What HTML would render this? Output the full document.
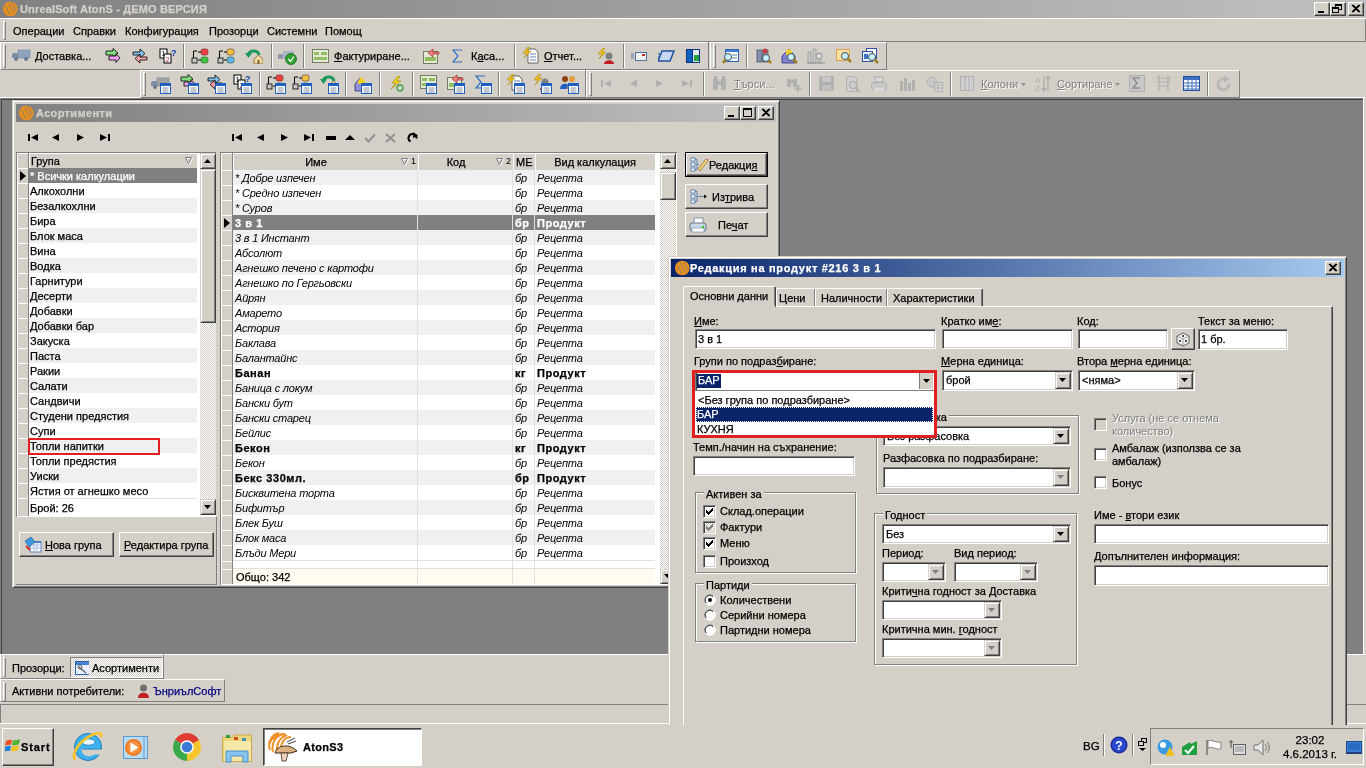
<!DOCTYPE html><html><head><meta charset="utf-8"><style>
*{margin:0;padding:0}
html,body{width:1366px;height:768px;overflow:hidden;background:#d4d0c8;font-family:"Liberation Sans",sans-serif;font-size:11px;color:#000}
div{position:absolute;box-sizing:border-box}
.t{white-space:nowrap;line-height:13px;font-size:11px;-webkit-text-stroke:0.25px}
#root{position:absolute;left:0;top:0;width:1366px;height:768px;will-change:transform}
.b{font-weight:bold}
.i{font-style:italic}
.r{border:1px solid;border-color:#fff #404040 #404040 #fff;box-shadow:inset -1px -1px #808080;background:#d4d0c8}
.sb{border:1px solid;border-color:#d4d0c8 #404040 #404040 #d4d0c8;box-shadow:inset 1px 1px #fff,inset -1px -1px #808080;background:#d4d0c8}
.tr{border:1px solid;border-color:#fff #808080 #808080 #fff}
.ts{border:1px solid;border-color:#808080 #fff #fff #808080}
.s{border:1px solid;border-color:#808080 #fff #fff #808080;box-shadow:inset 1px 1px #404040,inset -1px -1px #d4d0c8;background:#fff}
.g{border:1px solid #808080;box-shadow:inset 1px 1px #fff,1px 1px #fff}
.u{text-decoration:underline}
.dith{background-color:#fff;background-image:linear-gradient(45deg,#d4d0c8 25%,transparent 25%,transparent 75%,#d4d0c8 75%),linear-gradient(45deg,#d4d0c8 25%,transparent 25%,transparent 75%,#d4d0c8 75%);background-size:2px 2px;background-position:0 0,1px 1px}
</style></head><body><div id="root"><div style="left:0px;top:0px;width:1366px;height:18px;background:linear-gradient(to right,#808080,#c0c0c0)"></div>
<svg style="position:absolute;left:2px;top:1px;" width="16" height="16" viewBox="0 0 16 16"><circle cx="8.3" cy="8" r="7.3" fill="#e8901e"/><path d="M3.5 5 L8 14 M6.5 2.5 L11.5 12.5 M10 2 L14 10" stroke="#9a8060" stroke-width="1.3" opacity="0.85"/></svg>
<div class="t b" style="left:20px;top:3px;color:#d4d0c8;letter-spacing:0.15px">UnrealSoft AtonS - ДЕМО ВЕРСИЯ</div>
<div class="r" style="left:1314px;top:2px;width:16px;height:14px;"></div>
<svg style="position:absolute;left:1314px;top:2px;" width="16" height="14" viewBox="0 0 16 14"><rect x="4" y="9" width="6" height="2" fill="#000"/></svg>
<div class="r" style="left:1330px;top:2px;width:16px;height:14px;"></div>
<svg style="position:absolute;left:1330px;top:2px;" width="16" height="14" viewBox="0 0 16 14"><rect x="5.5" y="2.5" width="6" height="5" fill="none" stroke="#000"/><rect x="5" y="2" width="7" height="2" fill="#000"/><rect x="2.5" y="5.5" width="6" height="5" fill="#d4d0c8" stroke="#000"/><rect x="2" y="5" width="7" height="2" fill="#000"/></svg>
<div class="r" style="left:1348px;top:2px;width:16px;height:14px;"></div>
<svg style="position:absolute;left:1348px;top:2px;" width="16" height="14" viewBox="0 0 16 14"><path d="M4 3 L11 10 M5 3 L12 10 M11 3 L4 10 M12 3 L5 10" stroke="#000" stroke-width="1.1"/></svg>
<div style="left:0px;top:18px;width:1366px;height:1px;background:#fff"></div>
<div style="left:0px;top:41px;width:1366px;height:1px;background:#808080"></div>
<div style="left:1365px;top:19px;width:1px;height:22px;background:#808080"></div>
<div class="tr" style="left:3px;top:21px;width:3px;height:19px;"></div>
<div class="t " style="left:13px;top:25px;">Операции</div>
<div class="t " style="left:73px;top:25px;">Справки</div>
<div class="t " style="left:125px;top:25px;">Конфигурация</div>
<div class="t " style="left:209px;top:25px;">Прозорци</div>
<div class="t " style="left:267px;top:25px;">Системни</div>
<div class="t " style="left:325px;top:25px;">Помощ</div>
<div class="tr" style="left:0px;top:42px;width:887px;height:28px;"></div>
<div class="tr" style="left:3px;top:44px;width:3px;height:24px;"></div>
<svg style="position:absolute;left:12px;top:47px;" width="19" height="16" viewBox="0 0 19 16"><rect x="6" y="3" width="12" height="8" fill="#8fa3bd" stroke="#7088a8" stroke-width="0.6"/><path d="M1 6 H6 V11 H0 V8 Z" fill="#7c8ea8"/><circle cx="4" cy="12" r="2" fill="#6a7a90"/><circle cx="14" cy="12" r="2" fill="#6a7a90"/></svg>
<div class="t " style="left:35px;top:50px;"><span class="u">Д</span>оставка...</div>
<svg style="position:absolute;left:105px;top:48px;" width="16" height="16" viewBox="0 0 16 16"><path d="M1 3 H8 V0.5 L13 5 L8 9.5 V7 H1 Z" fill="#80e080" stroke="#000" stroke-width="0.8"/><path d="M4 8 H11 V5.5 L15 10 L11 14.5 V12 H4 Z" fill="#f0a0f0" stroke="#000" stroke-width="0.8"/></svg>
<svg style="position:absolute;left:132px;top:48px;" width="16" height="16" viewBox="0 0 16 16"><path d="M1 4 H8 V1 L13 5.5 L8 10 V7 H1 Z" fill="#80c0f0" stroke="#000" stroke-width="0.8"/><path d="M15 9 H8 V6 L3 10.5 L8 15 V12 H15 Z" fill="#f0a0a0" stroke="#000" stroke-width="0.8"/></svg>
<svg style="position:absolute;left:159px;top:48px;" width="17" height="16" viewBox="0 0 17 16"><rect x="1" y="1" width="7" height="9" fill="#fff" stroke="#000"/><rect x="5" y="6" width="7" height="9" fill="#fff" stroke="#000"/><text x="2.5" y="8" font-size="7" font-family="Liberation Sans">1</text><text x="6.5" y="14" font-size="7" fill="#c03030" font-family="Liberation Sans">2</text><text x="12" y="8" font-size="9" font-weight="bold" fill="#1040b0" font-family="Liberation Sans">?</text></svg>
<div style="left:183px;top:44px;width:1px;height:24px;background:#808080"></div>
<div style="left:184px;top:44px;width:1px;height:24px;background:#fff"></div>
<svg style="position:absolute;left:191px;top:48px;" width="18" height="16" viewBox="0 0 18 16"><path d="M2.5 10 V3 H6" stroke="#000" fill="none"/><rect x="1" y="10" width="5" height="5" fill="#c8c8c8" stroke="#000" stroke-width="0.8"/><path d="M7 4 H10 M7 12 H10" stroke="#000"/><rect x="10" y="1" width="7" height="6" rx="2" fill="#f04040" stroke="#603030" stroke-width="0.6"/><rect x="10" y="9" width="7" height="6" rx="2" fill="#40c040" stroke="#306030" stroke-width="0.6"/></svg>
<svg style="position:absolute;left:217px;top:48px;" width="18" height="16" viewBox="0 0 18 16"><path d="M2.5 10 V3 H6" stroke="#000" fill="none"/><rect x="1" y="10" width="5" height="5" fill="#c8c8c8" stroke="#000" stroke-width="0.8"/><path d="M7 4 H10 M7 12 H10" stroke="#000"/><rect x="10" y="1" width="7" height="6" rx="2" fill="#f0c040" stroke="#603030" stroke-width="0.6"/><rect x="10" y="9" width="7" height="6" rx="2" fill="#60b0f0" stroke="#306030" stroke-width="0.6"/></svg>
<svg style="position:absolute;left:245px;top:48px;" width="18" height="16" viewBox="0 0 18 16"><path d="M3 8 C3 2, 13 1, 14 7" stroke="#1a9a5a" stroke-width="3" fill="none"/><path d="M0 5 L3.5 10 L7 5 Z" fill="#1a9a5a"/><path d="M9 11 L13.5 7 L18 11 V16 H9 Z" fill="#f0d8a0" stroke="#806030" stroke-width="0.8"/><rect x="12.5" y="12" width="2" height="4" fill="#806030"/></svg>
<div style="left:271px;top:44px;width:1px;height:24px;background:#808080"></div>
<div style="left:272px;top:44px;width:1px;height:24px;background:#fff"></div>
<svg style="position:absolute;left:278px;top:48px;" width="19" height="17" viewBox="0 0 19 17"><rect x="5" y="3" width="11" height="8" fill="#a8b4c4"/><path d="M0 6 H5 V11 H0 Z" fill="#909cac"/><circle cx="13" cy="11" r="5.5" fill="#30a030" stroke="#106010" stroke-width="0.7"/><path d="M10.5 11 L12.5 13.5 L16 8.5" stroke="#fff" stroke-width="1.3" fill="none"/></svg>
<div style="left:303px;top:44px;width:1px;height:24px;background:#808080"></div>
<div style="left:304px;top:44px;width:1px;height:24px;background:#fff"></div>
<svg style="position:absolute;left:312px;top:48px;" width="17" height="16" viewBox="0 0 17 16"><rect x="0.5" y="1.5" width="16" height="13" fill="#e8e8d8" stroke="#708060"/><rect x="2" y="4" width="5" height="3" fill="#8fbf5f"/><rect x="9" y="4" width="6" height="3" fill="#8fbf5f"/><rect x="2" y="9" width="13" height="3" fill="#8fbf5f"/></svg>
<div class="t " style="left:334px;top:50px;"><span class="u">Ф</span>актуриране...</div>
<svg style="position:absolute;left:423px;top:48px;" width="17" height="16" viewBox="0 0 17 16"><rect x="0.5" y="3.5" width="14" height="12" fill="#e8e8d8" stroke="#708060"/><rect x="2" y="9" width="11" height="4" fill="#8fbf5f"/><path d="M16 4 H10 V1 L5 5 L10 9 V6 H16 Z" fill="#f08080" stroke="#a03030" stroke-width="0.7"/></svg>
<svg style="position:absolute;left:452px;top:48px;" width="11" height="16" viewBox="0 0 11 16"><path d="M10 2 H1 L6 8 L1 14 H10" stroke="#2a70c0" stroke-width="1.2" fill="none"/></svg>
<div class="t " style="left:471px;top:50px;">К<span class="u">а</span>са...</div>
<div style="left:514px;top:44px;width:1px;height:24px;background:#808080"></div>
<div style="left:515px;top:44px;width:1px;height:24px;background:#fff"></div>
<svg style="position:absolute;left:523px;top:47px;" width="16" height="17" viewBox="0 0 16 17"><path d="M5 2 H12 L15 5 V16 H5 Z" fill="#fff" stroke="#404040" stroke-width="0.8"/><path d="M7 7 H13 M7 10 H13 M7 13 H13" stroke="#6080b0"/><path d="M5 0 L0 6 H4 L1 11 L8 4 H4 L7 0 Z" fill="#f0c020" stroke="#a08000" stroke-width="0.5"/></svg>
<div class="t " style="left:544px;top:50px;"><span class="u">О</span>тчет...</div>
<svg style="position:absolute;left:598px;top:48px;" width="16" height="16" viewBox="0 0 16 16"><path d="M5 0 L0 6 H4 L1 11 L8 4 H4 L7 0 Z" fill="#f0c020" stroke="#a08000" stroke-width="0.5"/><circle cx="11" cy="8" r="3.5" fill="#808080"/><path d="M6 16 C6 11, 16 11, 16 16 Z" fill="#c02020"/></svg>
<div style="left:623px;top:44px;width:1px;height:24px;background:#808080"></div>
<div style="left:624px;top:44px;width:1px;height:24px;background:#fff"></div>
<svg style="position:absolute;left:631px;top:48px;" width="16" height="16" viewBox="0 0 16 16"><path d="M0 6 H3 M0 8 H3 M0 10 H3" stroke="#6080a0"/><rect x="4.5" y="4.5" width="11" height="8" fill="#f0f0f0" stroke="#5070a0"/><rect x="11" y="6" width="3" height="2" fill="#c03030"/></svg>
<svg style="position:absolute;left:658px;top:48px;" width="17" height="16" viewBox="0 0 17 16"><path d="M4 3 H16 L12 13 H0 Z" fill="#c8d8f0" stroke="#2050a0" stroke-width="1.5"/><path d="M0 6 H2 M0 9 H1" stroke="#2050a0"/></svg>
<svg style="position:absolute;left:686px;top:48px;" width="14" height="16" viewBox="0 0 14 16"><rect x="0.5" y="1.5" width="6" height="13" fill="#1060c0" stroke="#0a3080"/><rect x="6.5" y="1.5" width="7" height="13" fill="#e0e8f0" stroke="#0a3080"/><rect x="8" y="7" width="5" height="6" fill="#20a040"/></svg>
<div style="left:708px;top:42px;width:1px;height:28px;background:#808080"></div>
<div class="tr" style="left:710px;top:42px;width:177px;height:28px;"></div>
<div class="tr" style="left:713px;top:44px;width:3px;height:24px;"></div>
<svg style="position:absolute;left:722px;top:48px;" width="17" height="16" viewBox="0 0 17 16"><rect x="3.5" y="1.5" width="13" height="12" fill="#fff" stroke="#3060b0"/><rect x="4" y="2" width="12" height="2" fill="#4080d0"/><path d="M10 7 H15 M10 10 H15" stroke="#6080b0"/><circle cx="6" cy="9" r="3.5" fill="#c8f0f8" stroke="#405060"/><path d="M3.5 11.5 L1 15" stroke="#a08020" stroke-width="2.5"/></svg>
<div style="left:746px;top:44px;width:1px;height:24px;background:#808080"></div>
<div style="left:747px;top:44px;width:1px;height:24px;background:#fff"></div>
<svg style="position:absolute;left:755px;top:48px;" width="17" height="16" viewBox="0 0 17 16"><rect x="2" y="2" width="5" height="12" fill="#8090a8" stroke="#404860" stroke-width="0.7"/><rect x="8" y="2" width="5" height="12" fill="#8090a8" stroke="#404860" stroke-width="0.7"/><circle cx="10" cy="3" r="2.5" fill="#c04040"/><circle cx="11" cy="10" r="3.5" fill="#c8f0f8" stroke="#405060"/><path d="M13.5 12.5 L16 15" stroke="#a08020" stroke-width="2.5"/></svg>
<svg style="position:absolute;left:781px;top:48px;" width="17" height="16" viewBox="0 0 17 16"><path d="M1 8 L8 1 L14 8 V15 H1 Z" fill="#8080d0" stroke="#303070" stroke-width="0.8"/><path d="M5 3 L8 1 L11 3 V7 H5 Z" fill="#f0d020"/><circle cx="10" cy="9" r="3.5" fill="#c8f0f8" stroke="#405060"/><path d="M12.5 11.5 L16 15" stroke="#a08020" stroke-width="2.5"/></svg>
<svg style="position:absolute;left:807px;top:48px;" width="19" height="16" viewBox="0 0 19 16"><rect x="1" y="4" width="3" height="11" fill="#c8c8c8" stroke="#909090" stroke-width="0.6"/><rect x="6" y="1" width="3" height="14" fill="#c8c8c8" stroke="#909090" stroke-width="0.6"/><rect x="11" y="6" width="3" height="9" fill="#c8c8c8" stroke="#909090" stroke-width="0.6"/><circle cx="12" cy="8" r="3" fill="#d8d8d8" stroke="#909090"/><path d="M0 15 H18" stroke="#909090"/></svg>
<svg style="position:absolute;left:836px;top:48px;" width="16" height="16" viewBox="0 0 16 16"><rect x="0.5" y="1.5" width="13" height="11" fill="#f8e0a0" stroke="#e0a050"/><circle cx="9" cy="8" r="3.5" fill="#c8f0f8" stroke="#405060"/><path d="M11.5 10.5 L15 14" stroke="#a08020" stroke-width="2.5"/></svg>
<svg style="position:absolute;left:862px;top:48px;" width="17" height="16" viewBox="0 0 17 16"><rect x="4.5" y="0.5" width="10" height="10" fill="#fff" stroke="#3050a0"/><rect x="0.5" y="3.5" width="10" height="10" fill="#e8f0f8" stroke="#3050a0"/><rect x="2" y="6" width="4" height="5" fill="#4070c0"/><circle cx="10" cy="9" r="3.5" fill="#c8f0f8" stroke="#405060"/><path d="M12.5 11.5 L16 15" stroke="#a08020" stroke-width="2.5"/></svg>
<div style="left:0px;top:97px;width:1366px;height:1px;background:#fff"></div>
<div class="tr" style="left:140px;top:70px;width:446px;height:28px;"></div>
<div class="tr" style="left:143px;top:72px;width:3px;height:24px;"></div>
<svg style="position:absolute;left:151px;top:75px;" width="19" height="16" viewBox="0 0 19 16"><rect x="6" y="3" width="12" height="8" fill="#a0a0a0" stroke="#7088a8" stroke-width="0.6"/><path d="M1 6 H6 V11 H0 V8 Z" fill="#7c8ea8"/><circle cx="4" cy="12" r="2" fill="#6a7a90"/><circle cx="14" cy="12" r="2" fill="#6a7a90"/></svg>
<svg style="position:absolute;left:160px;top:83px;" width="11" height="11" viewBox="0 0 11 11"><rect x="0.5" y="0.5" width="10" height="10" fill="#fff" stroke="#1f5fbf"/><rect x="0" y="0" width="11" height="3" fill="#1f5fbf"/><path d="M2.5 5 H8.5 M2.5 7 H8.5 M2.5 9 H8.5" stroke="#8090a8"/></svg>
<svg style="position:absolute;left:180px;top:74px;" width="16" height="16" viewBox="0 0 16 16"><path d="M1 3 H8 V0.5 L13 5 L8 9.5 V7 H1 Z" fill="#80e080" stroke="#000" stroke-width="0.8"/><path d="M4 8 H11 V5.5 L15 10 L11 14.5 V12 H4 Z" fill="#f0a0f0" stroke="#000" stroke-width="0.8"/></svg>
<svg style="position:absolute;left:188px;top:83px;" width="11" height="11" viewBox="0 0 11 11"><rect x="0.5" y="0.5" width="10" height="10" fill="#fff" stroke="#1f5fbf"/><rect x="0" y="0" width="11" height="3" fill="#1f5fbf"/><path d="M2.5 5 H8.5 M2.5 7 H8.5 M2.5 9 H8.5" stroke="#8090a8"/></svg>
<svg style="position:absolute;left:207px;top:74px;" width="16" height="16" viewBox="0 0 16 16"><path d="M1 4 H8 V1 L13 5.5 L8 10 V7 H1 Z" fill="#80c0f0" stroke="#000" stroke-width="0.8"/><path d="M15 9 H8 V6 L3 10.5 L8 15 V12 H15 Z" fill="#f0a0a0" stroke="#000" stroke-width="0.8"/></svg>
<svg style="position:absolute;left:215px;top:83px;" width="11" height="11" viewBox="0 0 11 11"><rect x="0.5" y="0.5" width="10" height="10" fill="#fff" stroke="#1f5fbf"/><rect x="0" y="0" width="11" height="3" fill="#1f5fbf"/><path d="M2.5 5 H8.5 M2.5 7 H8.5 M2.5 9 H8.5" stroke="#8090a8"/></svg>
<svg style="position:absolute;left:233px;top:74px;" width="17" height="16" viewBox="0 0 17 16"><rect x="1" y="1" width="7" height="9" fill="#fff" stroke="#000"/><rect x="5" y="6" width="7" height="9" fill="#fff" stroke="#000"/><text x="2.5" y="8" font-size="7" font-family="Liberation Sans">1</text><text x="6.5" y="14" font-size="7" fill="#c03030" font-family="Liberation Sans">2</text><text x="12" y="8" font-size="9" font-weight="bold" fill="#1040b0" font-family="Liberation Sans">?</text></svg>
<svg style="position:absolute;left:241px;top:83px;" width="11" height="11" viewBox="0 0 11 11"><rect x="0.5" y="0.5" width="10" height="10" fill="#fff" stroke="#1f5fbf"/><rect x="0" y="0" width="11" height="3" fill="#1f5fbf"/><path d="M2.5 5 H8.5 M2.5 7 H8.5 M2.5 9 H8.5" stroke="#8090a8"/></svg>
<div style="left:259px;top:72px;width:1px;height:24px;background:#808080"></div>
<div style="left:260px;top:72px;width:1px;height:24px;background:#fff"></div>
<svg style="position:absolute;left:266px;top:74px;" width="18" height="16" viewBox="0 0 18 16"><path d="M2.5 10 V3 H6" stroke="#000" fill="none"/><rect x="1" y="10" width="5" height="5" fill="#c8c8c8" stroke="#000" stroke-width="0.8"/><path d="M7 4 H10 M7 12 H10" stroke="#000"/><rect x="10" y="1" width="7" height="6" rx="2" fill="#f04040" stroke="#603030" stroke-width="0.6"/><rect x="10" y="9" width="7" height="6" rx="2" fill="#c8c8c8" stroke="#306030" stroke-width="0.6"/></svg>
<svg style="position:absolute;left:275px;top:83px;" width="11" height="11" viewBox="0 0 11 11"><rect x="0.5" y="0.5" width="10" height="10" fill="#fff" stroke="#1f5fbf"/><rect x="0" y="0" width="11" height="3" fill="#1f5fbf"/><path d="M2.5 5 H8.5 M2.5 7 H8.5 M2.5 9 H8.5" stroke="#8090a8"/></svg>
<svg style="position:absolute;left:292px;top:74px;" width="18" height="16" viewBox="0 0 18 16"><path d="M2.5 10 V3 H6" stroke="#000" fill="none"/><rect x="1" y="10" width="5" height="5" fill="#c8c8c8" stroke="#000" stroke-width="0.8"/><path d="M7 4 H10 M7 12 H10" stroke="#000"/><rect x="10" y="1" width="7" height="6" rx="2" fill="#f0c040" stroke="#603030" stroke-width="0.6"/><rect x="10" y="9" width="7" height="6" rx="2" fill="#c8c8c8" stroke="#306030" stroke-width="0.6"/></svg>
<svg style="position:absolute;left:301px;top:83px;" width="11" height="11" viewBox="0 0 11 11"><rect x="0.5" y="0.5" width="10" height="10" fill="#fff" stroke="#1f5fbf"/><rect x="0" y="0" width="11" height="3" fill="#1f5fbf"/><path d="M2.5 5 H8.5 M2.5 7 H8.5 M2.5 9 H8.5" stroke="#8090a8"/></svg>
<svg style="position:absolute;left:320px;top:74px;" width="18" height="16" viewBox="0 0 18 16"><path d="M3 8 C3 2, 13 1, 14 7" stroke="#1a9a5a" stroke-width="3" fill="none"/><path d="M0 5 L3.5 10 L7 5 Z" fill="#1a9a5a"/><path d="M9 11 L13.5 7 L18 11 V16 H9 Z" fill="#f0d8a0" stroke="#806030" stroke-width="0.8"/><rect x="12.5" y="12" width="2" height="4" fill="#806030"/></svg>
<svg style="position:absolute;left:328px;top:83px;" width="11" height="11" viewBox="0 0 11 11"><rect x="0.5" y="0.5" width="10" height="10" fill="#fff" stroke="#1f5fbf"/><rect x="0" y="0" width="11" height="3" fill="#1f5fbf"/><path d="M2.5 5 H8.5 M2.5 7 H8.5 M2.5 9 H8.5" stroke="#8090a8"/></svg>
<div style="left:345px;top:72px;width:1px;height:24px;background:#808080"></div>
<div style="left:346px;top:72px;width:1px;height:24px;background:#fff"></div>
<svg style="position:absolute;left:354px;top:76px;" width="13" height="16" viewBox="0 0 13 16"><path d="M1 8 L6 2 L12 8 V15 H1 Z" fill="#9090d8" stroke="#303070" stroke-width="0.8"/><path d="M4 5 L7 1 L11 5 V8 H4 Z" fill="#f0d020"/></svg>
<svg style="position:absolute;left:361px;top:83px;" width="11" height="11" viewBox="0 0 11 11"><rect x="0.5" y="0.5" width="10" height="10" fill="#fff" stroke="#1f5fbf"/><rect x="0" y="0" width="11" height="3" fill="#1f5fbf"/><path d="M2.5 5 H8.5 M2.5 7 H8.5 M2.5 9 H8.5" stroke="#8090a8"/></svg>
<div style="left:379px;top:72px;width:1px;height:24px;background:#808080"></div>
<div style="left:380px;top:72px;width:1px;height:24px;background:#fff"></div>
<svg style="position:absolute;left:390px;top:76px;" width="14" height="16" viewBox="0 0 14 16"><path d="M8 0 L2 7 H6 L1 13 L11 5 H7 L10 0 Z" fill="#f0d020" stroke="#a08000" stroke-width="0.6"/><circle cx="10" cy="12" r="3" fill="none" stroke="#40a040" stroke-width="1.3"/></svg>
<div style="left:412px;top:72px;width:1px;height:24px;background:#808080"></div>
<div style="left:413px;top:72px;width:1px;height:24px;background:#fff"></div>
<svg style="position:absolute;left:420px;top:74px;" width="17" height="16" viewBox="0 0 17 16"><rect x="0.5" y="1.5" width="16" height="13" fill="#e8e8d8" stroke="#708060"/><rect x="2" y="4" width="5" height="3" fill="#8fbf5f"/><rect x="9" y="4" width="6" height="3" fill="#8fbf5f"/><rect x="2" y="9" width="13" height="3" fill="#8fbf5f"/></svg>
<svg style="position:absolute;left:426px;top:83px;" width="11" height="11" viewBox="0 0 11 11"><rect x="0.5" y="0.5" width="10" height="10" fill="#fff" stroke="#1f5fbf"/><rect x="0" y="0" width="11" height="3" fill="#1f5fbf"/><path d="M2.5 5 H8.5 M2.5 7 H8.5 M2.5 9 H8.5" stroke="#8090a8"/></svg>
<svg style="position:absolute;left:447px;top:74px;" width="17" height="16" viewBox="0 0 17 16"><rect x="0.5" y="3.5" width="14" height="12" fill="#e8e8d8" stroke="#708060"/><rect x="2" y="9" width="11" height="4" fill="#8fbf5f"/><path d="M16 4 H10 V1 L5 5 L10 9 V6 H16 Z" fill="#f08080" stroke="#a03030" stroke-width="0.7"/></svg>
<svg style="position:absolute;left:454px;top:83px;" width="11" height="11" viewBox="0 0 11 11"><rect x="0.5" y="0.5" width="10" height="10" fill="#fff" stroke="#1f5fbf"/><rect x="0" y="0" width="11" height="3" fill="#1f5fbf"/><path d="M2.5 5 H8.5 M2.5 7 H8.5 M2.5 9 H8.5" stroke="#8090a8"/></svg>
<svg style="position:absolute;left:475px;top:74px;" width="11" height="16" viewBox="0 0 11 16"><path d="M10 2 H1 L6 8 L1 14 H10" stroke="#2a70c0" stroke-width="1.2" fill="none"/></svg>
<svg style="position:absolute;left:481px;top:83px;" width="11" height="11" viewBox="0 0 11 11"><rect x="0.5" y="0.5" width="10" height="10" fill="#fff" stroke="#1f5fbf"/><rect x="0" y="0" width="11" height="3" fill="#1f5fbf"/><path d="M2.5 5 H8.5 M2.5 7 H8.5 M2.5 9 H8.5" stroke="#8090a8"/></svg>
<div style="left:498px;top:72px;width:1px;height:24px;background:#808080"></div>
<div style="left:499px;top:72px;width:1px;height:24px;background:#fff"></div>
<svg style="position:absolute;left:507px;top:74px;" width="16" height="17" viewBox="0 0 16 17"><path d="M5 2 H12 L15 5 V16 H5 Z" fill="#fff" stroke="#404040" stroke-width="0.8"/><path d="M7 7 H13 M7 10 H13 M7 13 H13" stroke="#6080b0"/><path d="M5 0 L0 6 H4 L1 11 L8 4 H4 L7 0 Z" fill="#f0c020" stroke="#a08000" stroke-width="0.5"/></svg>
<svg style="position:absolute;left:514px;top:83px;" width="11" height="11" viewBox="0 0 11 11"><rect x="0.5" y="0.5" width="10" height="10" fill="#fff" stroke="#1f5fbf"/><rect x="0" y="0" width="11" height="3" fill="#1f5fbf"/><path d="M2.5 5 H8.5 M2.5 7 H8.5 M2.5 9 H8.5" stroke="#8090a8"/></svg>
<svg style="position:absolute;left:534px;top:74px;" width="16" height="16" viewBox="0 0 16 16"><path d="M5 0 L0 6 H4 L1 11 L8 4 H4 L7 0 Z" fill="#f0c020" stroke="#a08000" stroke-width="0.5"/><circle cx="11" cy="8" r="3.5" fill="#808080"/><path d="M6 16 C6 11, 16 11, 16 16 Z" fill="#c02020"/></svg>
<svg style="position:absolute;left:541px;top:83px;" width="11" height="11" viewBox="0 0 11 11"><rect x="0.5" y="0.5" width="10" height="10" fill="#fff" stroke="#1f5fbf"/><rect x="0" y="0" width="11" height="3" fill="#1f5fbf"/><path d="M2.5 5 H8.5 M2.5 7 H8.5 M2.5 9 H8.5" stroke="#8090a8"/></svg>
<svg style="position:absolute;left:560px;top:75px;" width="17" height="16" viewBox="0 0 17 16"><circle cx="5" cy="4" r="3" fill="#904010"/><path d="M0 14 C0 7, 10 7, 10 14 Z" fill="#2060c0"/><circle cx="12" cy="4" r="3" fill="#e0a040"/><path d="M7 14 C7 7, 17 7, 17 14 Z" fill="#e09050"/></svg>
<svg style="position:absolute;left:568px;top:83px;" width="11" height="11" viewBox="0 0 11 11"><rect x="0.5" y="0.5" width="10" height="10" fill="#fff" stroke="#1f5fbf"/><rect x="0" y="0" width="11" height="3" fill="#1f5fbf"/><path d="M2.5 5 H8.5 M2.5 7 H8.5 M2.5 9 H8.5" stroke="#8090a8"/></svg>
<div style="left:585px;top:70px;width:1px;height:28px;background:#808080"></div>
<div class="tr" style="left:586px;top:70px;width:654px;height:28px;"></div>
<div class="tr" style="left:589px;top:72px;width:3px;height:24px;"></div>
<svg style="position:absolute;left:601px;top:80px;" width="11" height="7" viewBox="0 0 11 7"><rect x="0" y="0" width="2" height="7" fill="#b0b0b0"/><path d="M10 0 V7 L3 3.5 Z" fill="#b0b0b0"/></svg>
<svg style="position:absolute;left:630px;top:80px;" width="7" height="7" viewBox="0 0 7 7"><path d="M7 0 V7 L0 3.5 Z" fill="#b0b0b0"/></svg>
<svg style="position:absolute;left:656px;top:80px;" width="7" height="7" viewBox="0 0 7 7"><path d="M0 0 V7 L7 3.5 Z" fill="#b0b0b0"/></svg>
<svg style="position:absolute;left:682px;top:80px;" width="10" height="7" viewBox="0 0 10 7"><path d="M0 0 V7 L7 3.5 Z" fill="#b0b0b0"/><rect x="8" y="0" width="2" height="7" fill="#b0b0b0"/></svg>
<div style="left:703px;top:72px;width:1px;height:24px;background:#808080"></div>
<div style="left:704px;top:72px;width:1px;height:24px;background:#fff"></div>
<svg style="position:absolute;left:712px;top:76px;" width="15" height="15" viewBox="0 0 15 15"><rect x="1" y="3" width="5" height="11" fill="#b0b0b0"/><rect x="9" y="3" width="5" height="11" fill="#b0b0b0"/><rect x="5" y="5" width="5" height="4" fill="#b0b0b0"/><rect x="2" y="0" width="3" height="4" fill="#b0b0b0"/><rect x="10" y="0" width="3" height="4" fill="#b0b0b0"/></svg>
<div class="t " style="left:734px;top:78px;color:#808080;text-shadow:1px 1px 0 #fff;-webkit-text-stroke:0"><span class="u">Т</span>ърси...</div>
<svg style="position:absolute;left:786px;top:76px;" width="16" height="16" viewBox="0 0 16 16"><rect x="1" y="3" width="4" height="8" fill="#b0b0b0"/><rect x="7" y="3" width="4" height="8" fill="#b0b0b0"/><rect x="4" y="4" width="4" height="3" fill="#b0b0b0"/><path d="M12 9 V16 M8.5 12.5 H15.5" stroke="#b0b0b0" stroke-width="2"/></svg>
<div style="left:809px;top:72px;width:1px;height:24px;background:#808080"></div>
<div style="left:810px;top:72px;width:1px;height:24px;background:#fff"></div>
<svg style="position:absolute;left:819px;top:76px;" width="15" height="15" viewBox="0 0 15 15"><rect x="0.5" y="0.5" width="14" height="14" fill="#b0b0b0" stroke="#b8b8b8"/><rect x="3" y="1" width="9" height="5" fill="#c8c8c8"/><rect x="3" y="9" width="9" height="5" fill="#c0c0c0"/></svg>
<svg style="position:absolute;left:846px;top:76px;" width="15" height="16" viewBox="0 0 15 16"><path d="M0.5 0.5 H8 L11 3 V15.5 H0.5 Z" fill="#d0d0d0" stroke="#b0b0b0"/><circle cx="7" cy="9" r="3.5" fill="none" stroke="#b0b0b0" stroke-width="1.4"/><path d="M9.5 11.5 L14 16" stroke="#b0b0b0" stroke-width="2"/></svg>
<svg style="position:absolute;left:871px;top:76px;" width="16" height="16" viewBox="0 0 16 16"><rect x="4" y="1" width="8" height="5" fill="#d8d8d8" stroke="#b0b0b0"/><rect x="0.5" y="6.5" width="15" height="7" rx="2" fill="#c8c8c8" stroke="#b0b0b0"/><rect x="3" y="12" width="10" height="3" fill="#d8d8d8"/></svg>
<svg style="position:absolute;left:899px;top:76px;" width="16" height="16" viewBox="0 0 16 16"><rect x="1" y="5" width="3" height="10" fill="#b0b0b0"/><rect x="5" y="2" width="3" height="13" fill="#b0b0b0"/><rect x="9" y="7" width="3" height="8" fill="#b0b0b0"/><rect x="13" y="4" width="3" height="11" fill="#b0b0b0"/></svg>
<svg style="position:absolute;left:926px;top:76px;" width="17" height="16" viewBox="0 0 17 16"><circle cx="6" cy="6" r="5" fill="#c8c8c8" stroke="#b0b0b0"/><rect x="8.5" y="6.5" width="8" height="9" fill="#d8d8d8" stroke="#b0b0b0"/><path d="M9 9 H16 M9 12 H16 M12 7 V15" stroke="#b0b0b0"/></svg>
<div style="left:950px;top:72px;width:1px;height:24px;background:#808080"></div>
<div style="left:951px;top:72px;width:1px;height:24px;background:#fff"></div>
<svg style="position:absolute;left:960px;top:76px;" width="14" height="15" viewBox="0 0 14 15"><rect x="0.5" y="0.5" width="13" height="14" fill="#d0d0d0" stroke="#b0b0b0"/><path d="M5 1 V14 M9 1 V14" stroke="#b0b0b0"/></svg>
<div class="t " style="left:981px;top:78px;color:#808080;text-shadow:1px 1px 0 #fff;-webkit-text-stroke:0"><span class="u">К</span>олони</div>
<svg style="position:absolute;left:1021px;top:83px;" width="5" height="3" viewBox="0 0 5 3"><path d="M0 0 H5 L2.5 3 Z" fill="#909090"/></svg>
<svg style="position:absolute;left:1035px;top:75px;" width="17" height="17" viewBox="0 0 17 17"><text x="0" y="8" font-size="8" fill="#b0b0b0" font-family="Liberation Sans">A</text><text x="0" y="16" font-size="8" fill="#b0b0b0" font-family="Liberation Sans">Z</text><path d="M9 1 V16 M7 13 L9 16 L11 13 M13 16 V1 M11 4 L13 1 L15 4" stroke="#b0b0b0" stroke-width="1.4" fill="none"/></svg>
<div class="t " style="left:1057px;top:78px;color:#808080;text-shadow:1px 1px 0 #fff;-webkit-text-stroke:0"><span class="u">С</span>ортиране</div>
<svg style="position:absolute;left:1115px;top:83px;" width="5" height="3" viewBox="0 0 5 3"><path d="M0 0 H5 L2.5 3 Z" fill="#909090"/></svg>
<svg style="position:absolute;left:1129px;top:75px;" width="16" height="17" viewBox="0 0 16 17"><rect x="0.5" y="0.5" width="15" height="16" fill="#c8c8c8" stroke="#b0b0b0"/><path d="M11 3 H4 L8 8 L4 13 H11" stroke="#909090" stroke-width="1.6" fill="none"/></svg>
<svg style="position:absolute;left:1156px;top:75px;" width="16" height="17" viewBox="0 0 16 17"><path d="M0 3 H15 M0 7 H15 M3 0 V16 M12 0 V16 M3 11 H12" stroke="#b0b0b0" stroke-width="1.2" fill="none"/></svg>
<svg style="position:absolute;left:1183px;top:76px;" width="17" height="15" viewBox="0 0 17 15"><rect x="0.5" y="0.5" width="16" height="14" fill="#fff" stroke="#2050a0"/><rect x="1" y="1" width="15" height="3" fill="#4070c0"/><path d="M1 7 H16 M1 10 H16 M1 13 H16 M5 4 V14 M9 4 V14 M13 4 V14" stroke="#4070c0"/></svg>
<div style="left:1207px;top:72px;width:1px;height:24px;background:#808080"></div>
<div style="left:1208px;top:72px;width:1px;height:24px;background:#fff"></div>
<svg style="position:absolute;left:1216px;top:76px;" width="16" height="16" viewBox="0 0 16 16"><path d="M13 8 A5.5 5.5 0 1 1 9 3" stroke="#b8b8b8" stroke-width="3" fill="none"/><path d="M8 0 L14 3 L8 7 Z" fill="#b8b8b8"/></svg>
<div style="left:0px;top:98px;width:1366px;height:556px;background:#808080"></div>
<div style="left:0px;top:99px;width:1366px;height:1px;background:#404040"></div>
<div style="left:1px;top:99px;width:1px;height:555px;background:#404040"></div>
<div style="left:0px;top:98px;width:1px;height:556px;background:#808080"></div>
<div style="left:1363px;top:98px;width:1px;height:556px;background:#fff"></div>
<div style="left:1364px;top:98px;width:2px;height:556px;background:#d4d0c8"></div>
<div style="left:12px;top:100px;width:768px;height:488px;background:#d4d0c8;border:1px solid;border-color:#d4d0c8 #404040 #404040 #d4d0c8;box-shadow:inset 1px 1px #fff,inset -1px -1px #808080"></div>
<div style="left:16px;top:104px;width:760px;height:18px;background:linear-gradient(to right,#808080,#c0c0c0)"></div>
<svg style="position:absolute;left:18px;top:105px;" width="16" height="16" viewBox="0 0 16 16"><circle cx="8.3" cy="8" r="7.3" fill="#e8901e"/><path d="M3.5 5 L8 14 M6.5 2.5 L11.5 12.5 M10 2 L14 10" stroke="#9a8060" stroke-width="1.3" opacity="0.85"/></svg>
<div class="t b" style="left:36px;top:107px;color:#d4d0c8;letter-spacing:0.35px">Асортименти</div>
<div class="r" style="left:724px;top:106px;width:16px;height:14px;"></div>
<svg style="position:absolute;left:724px;top:106px;" width="16" height="14" viewBox="0 0 16 14"><rect x="4" y="9" width="6" height="2" fill="#000"/></svg>
<div class="r" style="left:740px;top:106px;width:16px;height:14px;"></div>
<svg style="position:absolute;left:740px;top:106px;" width="16" height="14" viewBox="0 0 16 14"><rect x="3.5" y="2.5" width="8" height="8" fill="none" stroke="#000"/><rect x="3" y="2" width="9" height="2" fill="#000"/></svg>
<div class="r" style="left:758px;top:106px;width:16px;height:14px;"></div>
<svg style="position:absolute;left:758px;top:106px;" width="16" height="14" viewBox="0 0 16 14"><path d="M4 3 L11 10 M5 3 L12 10 M11 3 L4 10 M12 3 L5 10" stroke="#000" stroke-width="1.1"/></svg>
<svg style="position:absolute;left:28px;top:134px;" width="10" height="7" viewBox="0 0 10 7"><rect x="0" y="0" width="2" height="7" fill="#000"/><path d="M10 0 V7 L3 3.5 Z" fill="#000"/></svg>
<svg style="position:absolute;left:52px;top:134px;" width="7" height="7" viewBox="0 0 7 7"><path d="M7 0 V7 L0 3.5 Z" fill="#000"/></svg>
<svg style="position:absolute;left:77px;top:134px;" width="7" height="7" viewBox="0 0 7 7"><path d="M0 0 V7 L7 3.5 Z" fill="#000"/></svg>
<svg style="position:absolute;left:100px;top:134px;" width="10" height="7" viewBox="0 0 10 7"><path d="M0 0 V7 L7 3.5 Z" fill="#000"/><rect x="8" y="0" width="2" height="7" fill="#000"/></svg>
<svg style="position:absolute;left:232px;top:134px;" width="10" height="7" viewBox="0 0 10 7"><rect x="0" y="0" width="2" height="7" fill="#000"/><path d="M10 0 V7 L3 3.5 Z" fill="#000"/></svg>
<svg style="position:absolute;left:257px;top:134px;" width="7" height="7" viewBox="0 0 7 7"><path d="M7 0 V7 L0 3.5 Z" fill="#000"/></svg>
<svg style="position:absolute;left:281px;top:134px;" width="7" height="7" viewBox="0 0 7 7"><path d="M0 0 V7 L7 3.5 Z" fill="#000"/></svg>
<svg style="position:absolute;left:304px;top:134px;" width="10" height="7" viewBox="0 0 10 7"><path d="M0 0 V7 L7 3.5 Z" fill="#000"/><rect x="8" y="0" width="2" height="7" fill="#000"/></svg>
<svg style="position:absolute;left:326px;top:136px;" width="10" height="4" viewBox="0 0 10 4"><rect x="0" y="0" width="10" height="4" fill="#000"/></svg>
<svg style="position:absolute;left:345px;top:135px;" width="10" height="5" viewBox="0 0 10 5"><path d="M0 5 H10 L5 0 Z" fill="#000"/></svg>
<svg style="position:absolute;left:364px;top:133px;" width="12" height="10" viewBox="0 0 12 10"><path d="M1 5 L4.5 8.5 L11 1.5" stroke="#909090" stroke-width="2" fill="none"/></svg>
<svg style="position:absolute;left:385px;top:133px;" width="11" height="10" viewBox="0 0 11 10"><path d="M1 1 L10 9 M10 1 L1 9" stroke="#909090" stroke-width="1.8"/></svg>
<svg style="position:absolute;left:407px;top:132px;" width="12" height="11" viewBox="0 0 12 11"><path d="M9.5 6.5 A4 4 0 1 0 3.5 9.5" stroke="#000" stroke-width="2" fill="none"/><path d="M6 0 L11 3.5 L6 6 Z" fill="#000"/></svg>
<div style="left:16px;top:152px;width:200px;height:365px;background:#fff;border-left:1px solid #808080;border-top:1px solid #808080"></div>
<div style="left:17px;top:153px;width:11px;height:363px;background:#d4d0c8;border-left:1px solid #fff"></div>
<div style="left:28px;top:153px;width:1px;height:363px;background:#808080"></div>
<div style="left:17px;top:153px;width:11px;height:1px;background:#fff"></div>
<div style="left:29px;top:153px;width:168px;height:15px;background:#d4d0c8;border-left:1px solid #fff;border-top:1px solid #fff"></div>
<div class="t " style="left:31px;top:155px;">Група</div>
<svg style="position:absolute;left:185px;top:157px;" width="8" height="8" viewBox="0 0 8 8"><path d="M1.5 1.5 H7.5 L4.5 7.5 Z" fill="none" stroke="#fff"/><path d="M0.5 0.5 H6.5 L3.5 6.5 Z" fill="none" stroke="#808080"/></svg>
<div style="left:29px;top:168px;width:168px;height:15px;background:#808080"></div>
<div style="left:18px;top:168px;width:10px;height:15px;border-top:1px solid #fff"></div>
<div class="t " style="left:30px;top:170px;color:#fff">* Всички калкулации</div>
<div style="left:29px;top:183px;width:168px;height:15px;background:#fff"></div>
<div style="left:18px;top:183px;width:10px;height:15px;border-top:1px solid #fff"></div>
<div class="t " style="left:30px;top:185px;color:#000">Алкохолни</div>
<div style="left:29px;top:198px;width:168px;height:15px;background:#f0f0f0"></div>
<div style="left:18px;top:198px;width:10px;height:15px;border-top:1px solid #fff"></div>
<div class="t " style="left:30px;top:200px;color:#000">Безалкохлни</div>
<div style="left:29px;top:213px;width:168px;height:15px;background:#fff"></div>
<div style="left:18px;top:213px;width:10px;height:15px;border-top:1px solid #fff"></div>
<div class="t " style="left:30px;top:215px;color:#000">Бира</div>
<div style="left:29px;top:228px;width:168px;height:15px;background:#f0f0f0"></div>
<div style="left:18px;top:228px;width:10px;height:15px;border-top:1px solid #fff"></div>
<div class="t " style="left:30px;top:230px;color:#000">Блок маса</div>
<div style="left:29px;top:243px;width:168px;height:15px;background:#fff"></div>
<div style="left:18px;top:243px;width:10px;height:15px;border-top:1px solid #fff"></div>
<div class="t " style="left:30px;top:245px;color:#000">Вина</div>
<div style="left:29px;top:258px;width:168px;height:15px;background:#f0f0f0"></div>
<div style="left:18px;top:258px;width:10px;height:15px;border-top:1px solid #fff"></div>
<div class="t " style="left:30px;top:260px;color:#000">Водка</div>
<div style="left:29px;top:273px;width:168px;height:15px;background:#fff"></div>
<div style="left:18px;top:273px;width:10px;height:15px;border-top:1px solid #fff"></div>
<div class="t " style="left:30px;top:275px;color:#000">Гарнитури</div>
<div style="left:29px;top:288px;width:168px;height:15px;background:#f0f0f0"></div>
<div style="left:18px;top:288px;width:10px;height:15px;border-top:1px solid #fff"></div>
<div class="t " style="left:30px;top:290px;color:#000">Десерти</div>
<div style="left:29px;top:303px;width:168px;height:15px;background:#fff"></div>
<div style="left:18px;top:303px;width:10px;height:15px;border-top:1px solid #fff"></div>
<div class="t " style="left:30px;top:305px;color:#000">Добавки</div>
<div style="left:29px;top:318px;width:168px;height:15px;background:#f0f0f0"></div>
<div style="left:18px;top:318px;width:10px;height:15px;border-top:1px solid #fff"></div>
<div class="t " style="left:30px;top:320px;color:#000">Добавки бар</div>
<div style="left:29px;top:333px;width:168px;height:15px;background:#fff"></div>
<div style="left:18px;top:333px;width:10px;height:15px;border-top:1px solid #fff"></div>
<div class="t " style="left:30px;top:335px;color:#000">Закуска</div>
<div style="left:29px;top:348px;width:168px;height:15px;background:#f0f0f0"></div>
<div style="left:18px;top:348px;width:10px;height:15px;border-top:1px solid #fff"></div>
<div class="t " style="left:30px;top:350px;color:#000">Паста</div>
<div style="left:29px;top:363px;width:168px;height:15px;background:#fff"></div>
<div style="left:18px;top:363px;width:10px;height:15px;border-top:1px solid #fff"></div>
<div class="t " style="left:30px;top:365px;color:#000">Ракии</div>
<div style="left:29px;top:378px;width:168px;height:15px;background:#f0f0f0"></div>
<div style="left:18px;top:378px;width:10px;height:15px;border-top:1px solid #fff"></div>
<div class="t " style="left:30px;top:380px;color:#000">Салати</div>
<div style="left:29px;top:393px;width:168px;height:15px;background:#fff"></div>
<div style="left:18px;top:393px;width:10px;height:15px;border-top:1px solid #fff"></div>
<div class="t " style="left:30px;top:395px;color:#000">Сандвичи</div>
<div style="left:29px;top:408px;width:168px;height:15px;background:#f0f0f0"></div>
<div style="left:18px;top:408px;width:10px;height:15px;border-top:1px solid #fff"></div>
<div class="t " style="left:30px;top:410px;color:#000">Студени предястия</div>
<div style="left:29px;top:423px;width:168px;height:15px;background:#fff"></div>
<div style="left:18px;top:423px;width:10px;height:15px;border-top:1px solid #fff"></div>
<div class="t " style="left:30px;top:425px;color:#000">Супи</div>
<div style="left:29px;top:438px;width:168px;height:15px;background:#f0f0f0"></div>
<div style="left:18px;top:438px;width:10px;height:15px;border-top:1px solid #fff"></div>
<div class="t " style="left:30px;top:440px;color:#000">Топли напитки</div>
<div style="left:29px;top:453px;width:168px;height:15px;background:#fff"></div>
<div style="left:18px;top:453px;width:10px;height:15px;border-top:1px solid #fff"></div>
<div class="t " style="left:30px;top:455px;color:#000">Топли предястия</div>
<div style="left:29px;top:468px;width:168px;height:15px;background:#f0f0f0"></div>
<div style="left:18px;top:468px;width:10px;height:15px;border-top:1px solid #fff"></div>
<div class="t " style="left:30px;top:470px;color:#000">Уиски</div>
<div style="left:29px;top:483px;width:168px;height:15px;background:#fff"></div>
<div style="left:18px;top:483px;width:10px;height:15px;border-top:1px solid #fff"></div>
<div class="t " style="left:30px;top:485px;color:#000">Ястия от агнешко месо</div>
<svg style="position:absolute;left:20px;top:171px;" width="6" height="10" viewBox="0 0 6 10"><path d="M0 0 V10 L6 5 Z" fill="#000"/></svg>
<div style="left:29px;top:498px;width:168px;height:1px;background:#e0e0e0"></div>
<div style="left:18px;top:498px;width:10px;height:16px;border-top:1px solid #fff"></div>
<div class="t " style="left:30px;top:502px;">Брой: 26</div>
<div style="left:197px;top:154px;width:3px;height:361px;background:#fff"></div>
<div class="dith" style="left:200px;top:153px;width:16px;height:346px;"></div>
<div class="sb" style="left:200px;top:153px;width:16px;height:16px;"></div>
<svg style="position:absolute;left:204px;top:159px;" width="7" height="4" viewBox="0 0 7 4"><path d="M0 4 H7 L3.5 0 Z" fill="#000"/></svg>
<div class="sb" style="left:200px;top:169px;width:16px;height:154px;"></div>
<div class="sb" style="left:200px;top:499px;width:16px;height:16px;"></div>
<svg style="position:absolute;left:204px;top:505px;" width="7" height="4" viewBox="0 0 7 4"><path d="M0 0 H7 L3.5 4 Z" fill="#000"/></svg>
<div style="left:16px;top:517px;width:201px;height:68px;background:#d4d0c8;border-right:1px solid #808080;border-bottom:1px solid #808080"></div>
<div class="r" style="left:19px;top:532px;width:95px;height:25px;"></div>
<svg style="position:absolute;left:24px;top:537px;" width="18" height="16" viewBox="0 0 18 16"><rect x="6" y="5" width="11" height="10" fill="#fff" stroke="#6080c0"/><path d="M6 8 H17 M6 11 H17 M10 5 V15 M13 5 V15" stroke="#a0b8e0"/><rect x="6" y="4" width="11" height="2" fill="#4a80d0"/><path d="M1 4 L7 0 L11 5 L5 10 Z" fill="#3a9ae0" stroke="#205080" stroke-width="0.6"/><path d="M2 9 L6 13" stroke="#d03030" stroke-width="2"/></svg>
<div class="t " style="left:45px;top:539px;"><span class="u">Н</span>ова група</div>
<div class="r" style="left:119px;top:532px;width:95px;height:25px;"></div>
<div class="t " style="left:124px;top:539px;"><span class="u">Р</span>едактира група</div>
<div style="left:217px;top:152px;width:3px;height:433px;background:#d4d0c8"></div>
<div style="left:220px;top:152px;width:457px;height:433px;background:#fff;border-left:1px solid #808080;border-top:1px solid #808080"></div>
<div style="left:221px;top:153px;width:11px;height:431px;background:#d4d0c8;border-left:1px solid #fff"></div>
<div style="left:221px;top:153px;width:11px;height:1px;background:#fff"></div>
<div style="left:232px;top:153px;width:1px;height:431px;background:#808080"></div>
<div style="left:233px;top:153px;width:185px;height:17px;background:#d4d0c8;border-left:1px solid #fff;border-top:1px solid #fff"></div>
<div class="t" style="left:166px;top:156px;width:300px;text-align:center;">Име</div>
<svg style="position:absolute;left:401px;top:158px;" width="8" height="8" viewBox="0 0 8 8"><path d="M1.5 1.5 H7.5 L4.5 7.5 Z" fill="none" stroke="#fff"/><path d="M0.5 0.5 H6.5 L3.5 6.5 Z" fill="none" stroke="#808080"/></svg>
<div class="t" style="left:411px;top:156px;font-size:9px;line-height:10px;-webkit-text-stroke:0">1</div>
<div style="left:418px;top:153px;width:95px;height:17px;background:#d4d0c8;border-left:1px solid #fff;border-top:1px solid #fff"></div>
<div class="t" style="left:306px;top:156px;width:300px;text-align:center;">Код</div>
<svg style="position:absolute;left:496px;top:158px;" width="8" height="8" viewBox="0 0 8 8"><path d="M1.5 1.5 H7.5 L4.5 7.5 Z" fill="none" stroke="#fff"/><path d="M0.5 0.5 H6.5 L3.5 6.5 Z" fill="none" stroke="#808080"/></svg>
<div class="t" style="left:506px;top:156px;font-size:9px;line-height:10px;-webkit-text-stroke:0">2</div>
<div style="left:513px;top:153px;width:22px;height:17px;background:#d4d0c8;border-left:1px solid #fff;border-top:1px solid #fff"></div>
<div class="t " style="left:516px;top:156px;">МЕ</div>
<div style="left:535px;top:153px;width:120px;height:17px;background:#d4d0c8;border-left:1px solid #fff;border-top:1px solid #fff"></div>
<div class="t" style="left:445px;top:156px;width:300px;text-align:center;">Вид калкулация</div>
<div style="left:233px;top:170px;width:422px;height:15px;background:#f0f0f0"></div>
<div style="left:222px;top:170px;width:10px;height:15px;border-top:1px solid #fff"></div>
<div class="t i" style="left:235px;top:172px;letter-spacing:-0.2px;-webkit-text-stroke:0">* Добре изпечен</div>
<div class="t i" style="left:515px;top:172px;letter-spacing:-0.2px;-webkit-text-stroke:0">бр</div>
<div class="t i" style="left:537px;top:172px;letter-spacing:-0.2px;-webkit-text-stroke:0">Рецепта</div>
<div style="left:233px;top:185px;width:422px;height:15px;background:#fff"></div>
<div style="left:222px;top:185px;width:10px;height:15px;border-top:1px solid #fff"></div>
<div class="t i" style="left:235px;top:187px;letter-spacing:-0.2px;-webkit-text-stroke:0">* Средно изпечен</div>
<div class="t i" style="left:515px;top:187px;letter-spacing:-0.2px;-webkit-text-stroke:0">бр</div>
<div class="t i" style="left:537px;top:187px;letter-spacing:-0.2px;-webkit-text-stroke:0">Рецепта</div>
<div style="left:233px;top:200px;width:422px;height:15px;background:#f0f0f0"></div>
<div style="left:222px;top:200px;width:10px;height:15px;border-top:1px solid #fff"></div>
<div class="t i" style="left:235px;top:202px;letter-spacing:-0.2px;-webkit-text-stroke:0">* Суров</div>
<div class="t i" style="left:515px;top:202px;letter-spacing:-0.2px;-webkit-text-stroke:0">бр</div>
<div class="t i" style="left:537px;top:202px;letter-spacing:-0.2px;-webkit-text-stroke:0">Рецепта</div>
<div style="left:233px;top:215px;width:422px;height:15px;background:#808080"></div>
<div style="left:222px;top:215px;width:10px;height:15px;border-top:1px solid #fff"></div>
<div class="t b" style="left:235px;top:217px;color:#fff;letter-spacing:0.55px">3 в 1</div>
<div class="t b" style="left:515px;top:217px;color:#fff;letter-spacing:0.55px">бр</div>
<div class="t b" style="left:537px;top:217px;color:#fff;letter-spacing:0.55px">Продукт</div>
<div style="left:233px;top:230px;width:422px;height:15px;background:#f0f0f0"></div>
<div style="left:222px;top:230px;width:10px;height:15px;border-top:1px solid #fff"></div>
<div class="t i" style="left:235px;top:232px;letter-spacing:-0.2px;-webkit-text-stroke:0">3 в 1 Инстант</div>
<div class="t i" style="left:515px;top:232px;letter-spacing:-0.2px;-webkit-text-stroke:0">бр</div>
<div class="t i" style="left:537px;top:232px;letter-spacing:-0.2px;-webkit-text-stroke:0">Рецепта</div>
<div style="left:233px;top:245px;width:422px;height:15px;background:#fff"></div>
<div style="left:222px;top:245px;width:10px;height:15px;border-top:1px solid #fff"></div>
<div class="t i" style="left:235px;top:247px;letter-spacing:-0.2px;-webkit-text-stroke:0">Абсолют</div>
<div class="t i" style="left:515px;top:247px;letter-spacing:-0.2px;-webkit-text-stroke:0">бр</div>
<div class="t i" style="left:537px;top:247px;letter-spacing:-0.2px;-webkit-text-stroke:0">Рецепта</div>
<div style="left:233px;top:260px;width:422px;height:15px;background:#f0f0f0"></div>
<div style="left:222px;top:260px;width:10px;height:15px;border-top:1px solid #fff"></div>
<div class="t i" style="left:235px;top:262px;letter-spacing:-0.2px;-webkit-text-stroke:0">Агнешко печено с картофи</div>
<div class="t i" style="left:515px;top:262px;letter-spacing:-0.2px;-webkit-text-stroke:0">бр</div>
<div class="t i" style="left:537px;top:262px;letter-spacing:-0.2px;-webkit-text-stroke:0">Рецепта</div>
<div style="left:233px;top:275px;width:422px;height:15px;background:#fff"></div>
<div style="left:222px;top:275px;width:10px;height:15px;border-top:1px solid #fff"></div>
<div class="t i" style="left:235px;top:277px;letter-spacing:-0.2px;-webkit-text-stroke:0">Агнешко по Гергьовски</div>
<div class="t i" style="left:515px;top:277px;letter-spacing:-0.2px;-webkit-text-stroke:0">бр</div>
<div class="t i" style="left:537px;top:277px;letter-spacing:-0.2px;-webkit-text-stroke:0">Рецепта</div>
<div style="left:233px;top:290px;width:422px;height:15px;background:#f0f0f0"></div>
<div style="left:222px;top:290px;width:10px;height:15px;border-top:1px solid #fff"></div>
<div class="t i" style="left:235px;top:292px;letter-spacing:-0.2px;-webkit-text-stroke:0">Айрян</div>
<div class="t i" style="left:515px;top:292px;letter-spacing:-0.2px;-webkit-text-stroke:0">бр</div>
<div class="t i" style="left:537px;top:292px;letter-spacing:-0.2px;-webkit-text-stroke:0">Рецепта</div>
<div style="left:233px;top:305px;width:422px;height:15px;background:#fff"></div>
<div style="left:222px;top:305px;width:10px;height:15px;border-top:1px solid #fff"></div>
<div class="t i" style="left:235px;top:307px;letter-spacing:-0.2px;-webkit-text-stroke:0">Амарето</div>
<div class="t i" style="left:515px;top:307px;letter-spacing:-0.2px;-webkit-text-stroke:0">бр</div>
<div class="t i" style="left:537px;top:307px;letter-spacing:-0.2px;-webkit-text-stroke:0">Рецепта</div>
<div style="left:233px;top:320px;width:422px;height:15px;background:#f0f0f0"></div>
<div style="left:222px;top:320px;width:10px;height:15px;border-top:1px solid #fff"></div>
<div class="t i" style="left:235px;top:322px;letter-spacing:-0.2px;-webkit-text-stroke:0">Астория</div>
<div class="t i" style="left:515px;top:322px;letter-spacing:-0.2px;-webkit-text-stroke:0">бр</div>
<div class="t i" style="left:537px;top:322px;letter-spacing:-0.2px;-webkit-text-stroke:0">Рецепта</div>
<div style="left:233px;top:335px;width:422px;height:15px;background:#fff"></div>
<div style="left:222px;top:335px;width:10px;height:15px;border-top:1px solid #fff"></div>
<div class="t i" style="left:235px;top:337px;letter-spacing:-0.2px;-webkit-text-stroke:0">Баклава</div>
<div class="t i" style="left:515px;top:337px;letter-spacing:-0.2px;-webkit-text-stroke:0">бр</div>
<div class="t i" style="left:537px;top:337px;letter-spacing:-0.2px;-webkit-text-stroke:0">Рецепта</div>
<div style="left:233px;top:350px;width:422px;height:15px;background:#f0f0f0"></div>
<div style="left:222px;top:350px;width:10px;height:15px;border-top:1px solid #fff"></div>
<div class="t i" style="left:235px;top:352px;letter-spacing:-0.2px;-webkit-text-stroke:0">Балантайнс</div>
<div class="t i" style="left:515px;top:352px;letter-spacing:-0.2px;-webkit-text-stroke:0">бр</div>
<div class="t i" style="left:537px;top:352px;letter-spacing:-0.2px;-webkit-text-stroke:0">Рецепта</div>
<div style="left:233px;top:365px;width:422px;height:15px;background:#fff"></div>
<div style="left:222px;top:365px;width:10px;height:15px;border-top:1px solid #fff"></div>
<div class="t b" style="left:235px;top:367px;letter-spacing:0.55px">Банан</div>
<div class="t b" style="left:515px;top:367px;letter-spacing:0.55px">кг</div>
<div class="t b" style="left:537px;top:367px;letter-spacing:0.55px">Продукт</div>
<div style="left:233px;top:380px;width:422px;height:15px;background:#f0f0f0"></div>
<div style="left:222px;top:380px;width:10px;height:15px;border-top:1px solid #fff"></div>
<div class="t i" style="left:235px;top:382px;letter-spacing:-0.2px;-webkit-text-stroke:0">Баница с локум</div>
<div class="t i" style="left:515px;top:382px;letter-spacing:-0.2px;-webkit-text-stroke:0">бр</div>
<div class="t i" style="left:537px;top:382px;letter-spacing:-0.2px;-webkit-text-stroke:0">Рецепта</div>
<div style="left:233px;top:395px;width:422px;height:15px;background:#fff"></div>
<div style="left:222px;top:395px;width:10px;height:15px;border-top:1px solid #fff"></div>
<div class="t i" style="left:235px;top:397px;letter-spacing:-0.2px;-webkit-text-stroke:0">Бански бут</div>
<div class="t i" style="left:515px;top:397px;letter-spacing:-0.2px;-webkit-text-stroke:0">бр</div>
<div class="t i" style="left:537px;top:397px;letter-spacing:-0.2px;-webkit-text-stroke:0">Рецепта</div>
<div style="left:233px;top:410px;width:422px;height:15px;background:#f0f0f0"></div>
<div style="left:222px;top:410px;width:10px;height:15px;border-top:1px solid #fff"></div>
<div class="t i" style="left:235px;top:412px;letter-spacing:-0.2px;-webkit-text-stroke:0">Бански старец</div>
<div class="t i" style="left:515px;top:412px;letter-spacing:-0.2px;-webkit-text-stroke:0">бр</div>
<div class="t i" style="left:537px;top:412px;letter-spacing:-0.2px;-webkit-text-stroke:0">Рецепта</div>
<div style="left:233px;top:425px;width:422px;height:15px;background:#fff"></div>
<div style="left:222px;top:425px;width:10px;height:15px;border-top:1px solid #fff"></div>
<div class="t i" style="left:235px;top:427px;letter-spacing:-0.2px;-webkit-text-stroke:0">Бейлис</div>
<div class="t i" style="left:515px;top:427px;letter-spacing:-0.2px;-webkit-text-stroke:0">бр</div>
<div class="t i" style="left:537px;top:427px;letter-spacing:-0.2px;-webkit-text-stroke:0">Рецепта</div>
<div style="left:233px;top:440px;width:422px;height:15px;background:#f0f0f0"></div>
<div style="left:222px;top:440px;width:10px;height:15px;border-top:1px solid #fff"></div>
<div class="t b" style="left:235px;top:442px;letter-spacing:0.55px">Бекон</div>
<div class="t b" style="left:515px;top:442px;letter-spacing:0.55px">кг</div>
<div class="t b" style="left:537px;top:442px;letter-spacing:0.55px">Продукт</div>
<div style="left:233px;top:455px;width:422px;height:15px;background:#fff"></div>
<div style="left:222px;top:455px;width:10px;height:15px;border-top:1px solid #fff"></div>
<div class="t i" style="left:235px;top:457px;letter-spacing:-0.2px;-webkit-text-stroke:0">Бекон</div>
<div class="t i" style="left:515px;top:457px;letter-spacing:-0.2px;-webkit-text-stroke:0">бр</div>
<div class="t i" style="left:537px;top:457px;letter-spacing:-0.2px;-webkit-text-stroke:0">Рецепта</div>
<div style="left:233px;top:470px;width:422px;height:15px;background:#f0f0f0"></div>
<div style="left:222px;top:470px;width:10px;height:15px;border-top:1px solid #fff"></div>
<div class="t b" style="left:235px;top:472px;letter-spacing:0.55px">Бекс 330мл.</div>
<div class="t b" style="left:515px;top:472px;letter-spacing:0.55px">бр</div>
<div class="t b" style="left:537px;top:472px;letter-spacing:0.55px">Продукт</div>
<div style="left:233px;top:485px;width:422px;height:15px;background:#fff"></div>
<div style="left:222px;top:485px;width:10px;height:15px;border-top:1px solid #fff"></div>
<div class="t i" style="left:235px;top:487px;letter-spacing:-0.2px;-webkit-text-stroke:0">Бисквитена торта</div>
<div class="t i" style="left:515px;top:487px;letter-spacing:-0.2px;-webkit-text-stroke:0">бр</div>
<div class="t i" style="left:537px;top:487px;letter-spacing:-0.2px;-webkit-text-stroke:0">Рецепта</div>
<div style="left:233px;top:500px;width:422px;height:15px;background:#f0f0f0"></div>
<div style="left:222px;top:500px;width:10px;height:15px;border-top:1px solid #fff"></div>
<div class="t i" style="left:235px;top:502px;letter-spacing:-0.2px;-webkit-text-stroke:0">Бифитър</div>
<div class="t i" style="left:515px;top:502px;letter-spacing:-0.2px;-webkit-text-stroke:0">бр</div>
<div class="t i" style="left:537px;top:502px;letter-spacing:-0.2px;-webkit-text-stroke:0">Рецепта</div>
<div style="left:233px;top:515px;width:422px;height:15px;background:#fff"></div>
<div style="left:222px;top:515px;width:10px;height:15px;border-top:1px solid #fff"></div>
<div class="t i" style="left:235px;top:517px;letter-spacing:-0.2px;-webkit-text-stroke:0">Блек Буш</div>
<div class="t i" style="left:515px;top:517px;letter-spacing:-0.2px;-webkit-text-stroke:0">бр</div>
<div class="t i" style="left:537px;top:517px;letter-spacing:-0.2px;-webkit-text-stroke:0">Рецепта</div>
<div style="left:233px;top:530px;width:422px;height:15px;background:#f0f0f0"></div>
<div style="left:222px;top:530px;width:10px;height:15px;border-top:1px solid #fff"></div>
<div class="t i" style="left:235px;top:532px;letter-spacing:-0.2px;-webkit-text-stroke:0">Блок маса</div>
<div class="t i" style="left:515px;top:532px;letter-spacing:-0.2px;-webkit-text-stroke:0">бр</div>
<div class="t i" style="left:537px;top:532px;letter-spacing:-0.2px;-webkit-text-stroke:0">Рецепта</div>
<div style="left:233px;top:545px;width:422px;height:15px;background:#fff"></div>
<div style="left:222px;top:545px;width:10px;height:15px;border-top:1px solid #fff"></div>
<div class="t i" style="left:235px;top:547px;letter-spacing:-0.2px;-webkit-text-stroke:0">Блъди Мери</div>
<div class="t i" style="left:515px;top:547px;letter-spacing:-0.2px;-webkit-text-stroke:0">бр</div>
<div class="t i" style="left:537px;top:547px;letter-spacing:-0.2px;-webkit-text-stroke:0">Рецепта</div>
<div style="left:417px;top:170px;width:1px;height:399px;background:#e0e0e0"></div>
<div style="left:512px;top:170px;width:1px;height:399px;background:#e0e0e0"></div>
<div style="left:534px;top:170px;width:1px;height:399px;background:#e0e0e0"></div>
<svg style="position:absolute;left:224px;top:218px;" width="6" height="10" viewBox="0 0 6 10"><path d="M0 0 V10 L6 5 Z" fill="#000"/></svg>
<div style="left:233px;top:560px;width:422px;height:1px;background:#e0e0e0"></div>
<div style="left:233px;top:568px;width:422px;height:1px;background:#e0e0e0"></div>
<div style="left:222px;top:561px;width:10px;height:8px;border-top:1px solid #fff"></div>
<div style="left:233px;top:569px;width:422px;height:15px;background:#fffbf0"></div>
<div style="left:222px;top:569px;width:10px;height:15px;border-top:1px solid #fff"></div>
<div style="left:417px;top:569px;width:1px;height:15px;background:#e0e0e0"></div>
<div style="left:512px;top:569px;width:1px;height:15px;background:#e0e0e0"></div>
<div style="left:534px;top:569px;width:1px;height:15px;background:#e0e0e0"></div>
<div class="t " style="left:236px;top:571px;">Общо: 342</div>
<div style="left:655px;top:154px;width:5px;height:429px;background:#fff"></div>
<div class="dith" style="left:660px;top:153px;width:16px;height:416px;"></div>
<div class="sb" style="left:660px;top:153px;width:16px;height:16px;"></div>
<svg style="position:absolute;left:664px;top:159px;" width="7" height="4" viewBox="0 0 7 4"><path d="M0 4 H7 L3.5 0 Z" fill="#000"/></svg>
<div class="sb" style="left:660px;top:172px;width:16px;height:28px;"></div>
<div class="sb" style="left:660px;top:569px;width:16px;height:15px;"></div>
<svg style="position:absolute;left:664px;top:574px;" width="7" height="4" viewBox="0 0 7 4"><path d="M0 0 H7 L3.5 4 Z" fill="#000"/></svg>
<div style="left:685px;top:152px;width:83px;height:25px;border:1px solid #000;background:#d4d0c8"></div>
<div class="r" style="left:686px;top:153px;width:81px;height:23px;"></div>
<svg style="position:absolute;left:690px;top:157px;" width="20" height="16" viewBox="0 0 20 16"><rect x="1" y="1" width="4" height="3" fill="#fff" stroke="#4070b0" stroke-width="0.8"/><rect x="1" y="6" width="4" height="3" fill="#fff" stroke="#4070b0" stroke-width="0.8"/><rect x="1" y="11" width="4" height="3" fill="#fff" stroke="#4070b0" stroke-width="0.8"/><path d="M5 2.5 H7 V12.5 H5 M7 7.5 H9" stroke="#4070b0" stroke-width="0.8" fill="none"/><path d="M8 12 L16 2 L18 4 L10 14 Z" fill="#f0d070" stroke="#806030" stroke-width="0.6"/><path d="M16 2 L18 4 L19 2 Z" fill="#e08080"/></svg>
<div class="t " style="left:709px;top:159px;">Редакци<span class="u">я</span></div>
<div class="r" style="left:685px;top:184px;width:83px;height:25px;"></div>
<svg style="position:absolute;left:690px;top:189px;" width="20" height="16" viewBox="0 0 20 16"><rect x="1" y="1" width="4" height="3" fill="#fff" stroke="#4070b0" stroke-width="0.8"/><rect x="1" y="6" width="4" height="3" fill="#fff" stroke="#4070b0" stroke-width="0.8"/><rect x="1" y="11" width="4" height="3" fill="#fff" stroke="#4070b0" stroke-width="0.8"/><path d="M5 2.5 H7 V12.5 H5 M7 7.5 H15" stroke="#4070b0" stroke-width="0.8" fill="none"/><path d="M14 5.5 L17 7.5 L14 9.5 Z" fill="#000"/></svg>
<div class="t " style="left:712px;top:191px;">Из<span class="u">т</span>рива</div>
<div class="r" style="left:685px;top:212px;width:83px;height:25px;"></div>
<svg style="position:absolute;left:689px;top:217px;" width="18" height="16" viewBox="0 0 18 16"><rect x="5" y="1" width="9" height="6" fill="#fff" stroke="#6080a0" stroke-width="0.8"/><rect x="1" y="6" width="16" height="8" rx="2" fill="#c8d8e8" stroke="#506070" stroke-width="0.8"/><rect x="3" y="11" width="12" height="4" fill="#fff" stroke="#6080a0" stroke-width="0.6"/><rect x="13" y="9" width="2" height="2" fill="#20c020"/></svg>
<div class="t " style="left:718px;top:219px;">Пе<span class="u">ч</span>ат</div>
<div style="left:0px;top:654px;width:1366px;height:1px;background:#fff"></div>
<div style="left:0px;top:655px;width:1366px;height:70px;background:#d4d0c8"></div>
<div class="tr" style="left:0px;top:654px;width:164px;height:25px;"></div>
<div class="tr" style="left:3px;top:657px;width:3px;height:20px;"></div>
<div class="t " style="left:12px;top:662px;">Прозорци:</div>
<div class="dith" style="left:70px;top:657px;width:93px;height:21px;border:1px solid;border-color:#808080 #fff #fff #808080"></div>
<svg style="position:absolute;left:75px;top:661px;" width="14" height="14" viewBox="0 0 14 14"><rect x="0.5" y="0.5" width="15" height="13" fill="#e8f0ff" stroke="#3060b0"/><rect x="1" y="1" width="14" height="3" fill="#4a80d0"/><path d="M4 6 L11 12" stroke="#606060" stroke-width="1.5"/><circle cx="5" cy="6" r="2" fill="none" stroke="#606060"/></svg>
<div class="t " style="left:92px;top:662px;">Асортименти</div>
<div class="tr" style="left:0px;top:679px;width:225px;height:23px;"></div>
<div class="tr" style="left:3px;top:682px;width:3px;height:19px;"></div>
<div class="t " style="left:12px;top:685px;">Активни потребители:</div>
<svg style="position:absolute;left:138px;top:684px;" width="11" height="14" viewBox="0 0 11 14"><circle cx="5.5" cy="4" r="3.5" fill="#707070"/><path d="M0 14 C0 7, 11 7, 11 14 Z" fill="#c02020"/></svg>
<div class="t " style="left:153px;top:685px;color:#000080">ЪнриълСофт</div>
<div style="left:0px;top:704px;width:1366px;height:1px;background:#808080"></div>
<div style="left:0px;top:705px;width:1px;height:18px;background:#808080"></div>
<div style="left:0px;top:723px;width:1366px;height:1px;background:#fff"></div>
<div style="left:0px;top:725px;width:1366px;height:1px;background:#fff"></div>
<div style="left:668px;top:256px;width:679px;height:480px;background:#d4d0c8;border:1px solid;border-color:#d4d0c8 #404040 #404040 #d4d0c8;box-shadow:inset 1px 1px #fff,inset -1px -1px #808080"></div>
<div style="left:671px;top:259px;width:673px;height:18px;background:linear-gradient(to right,#0a246a,#a6caf0)"></div>
<svg style="position:absolute;left:674px;top:260px;" width="16" height="16" viewBox="0 0 16 16"><circle cx="8.3" cy="8" r="7.3" fill="#e8901e"/><path d="M3.5 5 L8 14 M6.5 2.5 L11.5 12.5 M10 2 L14 10" stroke="#9a8060" stroke-width="1.3" opacity="0.85"/></svg>
<div class="t b" style="left:690px;top:262px;color:#fff;letter-spacing:0.7px">Редакция на продукт #216 3 в 1</div>
<div class="r" style="left:1325px;top:261px;width:16px;height:14px;"></div>
<svg style="position:absolute;left:1325px;top:261px;" width="16" height="14" viewBox="0 0 16 14"><path d="M4 3 L11 10 M5 3 L12 10 M11 3 L4 10 M12 3 L5 10" stroke="#000" stroke-width="1.1"/></svg>
<div style="left:683px;top:306px;width:650px;height:430px;border-left:1px solid #fff;border-top:1px solid #fff;border-right:1px solid #404040;box-shadow:inset -1px 0 #808080"></div>
<div style="left:776px;top:288px;width:40px;height:18px;background:#d4d0c8;border-left:1px solid #fff;border-top:1px solid #fff;border-right:1px solid #404040;box-shadow:inset -1px 0 #808080;border-radius:2px 2px 0 0"></div>
<div class="t " style="left:779px;top:292px;">Цени</div>
<div style="left:815px;top:288px;width:73px;height:18px;background:#d4d0c8;border-left:1px solid #fff;border-top:1px solid #fff;border-right:1px solid #404040;box-shadow:inset -1px 0 #808080;border-radius:2px 2px 0 0"></div>
<div class="t " style="left:821px;top:292px;">Наличности</div>
<div style="left:887px;top:288px;width:96px;height:18px;background:#d4d0c8;border-left:1px solid #fff;border-top:1px solid #fff;border-right:1px solid #404040;box-shadow:inset -1px 0 #808080;border-radius:2px 2px 0 0"></div>
<div class="t " style="left:893px;top:292px;">Характеристики</div>
<div style="left:683px;top:286px;width:93px;height:21px;background:#d4d0c8;border-left:1px solid #fff;border-top:1px solid #fff;border-right:1px solid #404040;box-shadow:inset -1px 0 #808080;border-radius:2px 2px 0 0"></div>
<div style="left:684px;top:305px;width:91px;height:3px;background:#d4d0c8"></div>
<div class="t " style="left:690px;top:290px;">Основни данни</div>
<div class="t " style="left:694px;top:315px;"><span class="u">И</span>ме:</div>
<div class="s" style="left:695px;top:329px;width:241px;height:20px;"></div>
<div class="t " style="left:698px;top:333px;">3 в 1</div>
<div class="t " style="left:941px;top:315px;">Кратко им<span class="u">е</span>:</div>
<div class="s" style="left:942px;top:329px;width:131px;height:20px;"></div>
<div class="t " style="left:1077px;top:315px;">Код:</div>
<div class="s" style="left:1078px;top:329px;width:90px;height:20px;"></div>
<div class="r" style="left:1171px;top:328px;width:24px;height:22px;"></div>
<svg style="position:absolute;left:1175px;top:332px;" width="16" height="15" viewBox="0 0 16 15"><path d="M2 4 L8 1 L14 4 L14 11 L8 14 L2 11 Z" fill="#f0f0f0" stroke="#404040" stroke-width="0.8"/><path d="M2 4 L8 7 L14 4 M8 7 V14" stroke="#808080" stroke-width="0.7" fill="none"/><circle cx="8" cy="4" r="0.9"/><circle cx="5" cy="9" r="0.9"/><circle cx="11" cy="9" r="0.9"/></svg>
<div class="t " style="left:1198px;top:315px;">Текст за меню:</div>
<div class="s" style="left:1198px;top:329px;width:90px;height:21px;"></div>
<div class="t " style="left:1201px;top:333px;">1 бр.</div>
<div class="t " style="left:694px;top:355px;">Групи по подраз<span class="u">б</span>иране:</div>
<div class="t " style="left:941px;top:355px;"><span class="u">М</span>ерна единица:</div>
<div class="s" style="left:942px;top:370px;width:131px;height:21px;"></div>
<div class="sb" style="left:1055px;top:372px;width:16px;height:17px;"></div>
<svg style="position:absolute;left:1059px;top:378px;" width="7" height="4" viewBox="0 0 7 4"><path d="M0 0 H7 L3.5 4 Z" fill="#000"/></svg>
<div class="t " style="left:946px;top:374px;">брой</div>
<div class="t " style="left:1077px;top:355px;">Втора <span class="u">м</span>ерна единица:</div>
<div class="s" style="left:1078px;top:370px;width:117px;height:21px;"></div>
<div class="sb" style="left:1177px;top:372px;width:16px;height:17px;"></div>
<svg style="position:absolute;left:1181px;top:378px;" width="7" height="4" viewBox="0 0 7 4"><path d="M0 0 H7 L3.5 4 Z" fill="#000"/></svg>
<div class="t " style="left:1082px;top:374px;">&lt;няма&gt;</div>
<div class="g" style="left:876px;top:415px;width:203px;height:79px;"></div>
<div class="t" style="left:883px;top:411px;background:#d4d0c8;padding:0 2px">Разфасовка</div>
<div class="s" style="left:883px;top:426px;width:188px;height:20px;"></div>
<div class="sb" style="left:1053px;top:428px;width:16px;height:16px;"></div>
<svg style="position:absolute;left:1057px;top:434px;" width="7" height="4" viewBox="0 0 7 4"><path d="M0 0 H7 L3.5 4 Z" fill="#000"/></svg>
<div class="t " style="left:887px;top:430px;">Без разфасовка</div>
<div class="t " style="left:883px;top:452px;">Разфасовка по подразбиране:</div>
<div class="s" style="left:883px;top:467px;width:188px;height:21px;"></div>
<div class="sb" style="left:1053px;top:469px;width:16px;height:17px;"></div>
<svg style="position:absolute;left:1057px;top:475px;" width="7" height="4" viewBox="0 0 7 4"><path d="M0 0 H7 L3.5 4 Z" fill="#808080"/></svg>
<div class="t " style="left:693px;top:441px;">Темп./начин на съхранение:</div>
<div class="s" style="left:693px;top:456px;width:162px;height:20px;"></div>
<div class="g" style="left:695px;top:492px;width:161px;height:81px;"></div>
<div class="t" style="left:704px;top:488px;background:#d4d0c8;padding:0 2px">Активен за</div>
<div class="s" style="left:703px;top:505px;width:13px;height:13px;background:#fff"></div>
<svg style="position:absolute;left:706px;top:508px;shape-rendering:crispEdges" width="7" height="7" viewBox="0 0 7 7"><rect x="6" y="0" width="1" height="1" fill="#000"/><rect x="5" y="1" width="1" height="1" fill="#000"/><rect x="6" y="1" width="1" height="1" fill="#000"/><rect x="0" y="2" width="1" height="1" fill="#000"/><rect x="4" y="2" width="1" height="1" fill="#000"/><rect x="5" y="2" width="1" height="1" fill="#000"/><rect x="6" y="2" width="1" height="1" fill="#000"/><rect x="0" y="3" width="1" height="1" fill="#000"/><rect x="1" y="3" width="1" height="1" fill="#000"/><rect x="3" y="3" width="1" height="1" fill="#000"/><rect x="4" y="3" width="1" height="1" fill="#000"/><rect x="5" y="3" width="1" height="1" fill="#000"/><rect x="0" y="4" width="1" height="1" fill="#000"/><rect x="1" y="4" width="1" height="1" fill="#000"/><rect x="2" y="4" width="1" height="1" fill="#000"/><rect x="3" y="4" width="1" height="1" fill="#000"/><rect x="4" y="4" width="1" height="1" fill="#000"/><rect x="1" y="5" width="1" height="1" fill="#000"/><rect x="2" y="5" width="1" height="1" fill="#000"/><rect x="3" y="5" width="1" height="1" fill="#000"/><rect x="2" y="6" width="1" height="1" fill="#000"/></svg>
<div class="t " style="left:720px;top:505px;">Склад.операции</div>
<div class="s" style="left:703px;top:521px;width:13px;height:13px;background:#fff"></div>
<div class="dith" style="left:705px;top:523px;width:9px;height:9px;"></div>
<svg style="position:absolute;left:706px;top:524px;shape-rendering:crispEdges" width="7" height="7" viewBox="0 0 7 7"><rect x="6" y="0" width="1" height="1" fill="#808080"/><rect x="5" y="1" width="1" height="1" fill="#808080"/><rect x="6" y="1" width="1" height="1" fill="#808080"/><rect x="0" y="2" width="1" height="1" fill="#808080"/><rect x="4" y="2" width="1" height="1" fill="#808080"/><rect x="5" y="2" width="1" height="1" fill="#808080"/><rect x="6" y="2" width="1" height="1" fill="#808080"/><rect x="0" y="3" width="1" height="1" fill="#808080"/><rect x="1" y="3" width="1" height="1" fill="#808080"/><rect x="3" y="3" width="1" height="1" fill="#808080"/><rect x="4" y="3" width="1" height="1" fill="#808080"/><rect x="5" y="3" width="1" height="1" fill="#808080"/><rect x="0" y="4" width="1" height="1" fill="#808080"/><rect x="1" y="4" width="1" height="1" fill="#808080"/><rect x="2" y="4" width="1" height="1" fill="#808080"/><rect x="3" y="4" width="1" height="1" fill="#808080"/><rect x="4" y="4" width="1" height="1" fill="#808080"/><rect x="1" y="5" width="1" height="1" fill="#808080"/><rect x="2" y="5" width="1" height="1" fill="#808080"/><rect x="3" y="5" width="1" height="1" fill="#808080"/><rect x="2" y="6" width="1" height="1" fill="#808080"/></svg>
<div class="t " style="left:720px;top:521px;">Фактури</div>
<div class="s" style="left:703px;top:537px;width:13px;height:13px;background:#fff"></div>
<svg style="position:absolute;left:706px;top:540px;shape-rendering:crispEdges" width="7" height="7" viewBox="0 0 7 7"><rect x="6" y="0" width="1" height="1" fill="#000"/><rect x="5" y="1" width="1" height="1" fill="#000"/><rect x="6" y="1" width="1" height="1" fill="#000"/><rect x="0" y="2" width="1" height="1" fill="#000"/><rect x="4" y="2" width="1" height="1" fill="#000"/><rect x="5" y="2" width="1" height="1" fill="#000"/><rect x="6" y="2" width="1" height="1" fill="#000"/><rect x="0" y="3" width="1" height="1" fill="#000"/><rect x="1" y="3" width="1" height="1" fill="#000"/><rect x="3" y="3" width="1" height="1" fill="#000"/><rect x="4" y="3" width="1" height="1" fill="#000"/><rect x="5" y="3" width="1" height="1" fill="#000"/><rect x="0" y="4" width="1" height="1" fill="#000"/><rect x="1" y="4" width="1" height="1" fill="#000"/><rect x="2" y="4" width="1" height="1" fill="#000"/><rect x="3" y="4" width="1" height="1" fill="#000"/><rect x="4" y="4" width="1" height="1" fill="#000"/><rect x="1" y="5" width="1" height="1" fill="#000"/><rect x="2" y="5" width="1" height="1" fill="#000"/><rect x="3" y="5" width="1" height="1" fill="#000"/><rect x="2" y="6" width="1" height="1" fill="#000"/></svg>
<div class="t " style="left:720px;top:537px;">Меню</div>
<div class="s" style="left:703px;top:555px;width:13px;height:13px;background:#fff"></div>
<div class="t " style="left:720px;top:555px;">Произход</div>
<div class="g" style="left:695px;top:583px;width:161px;height:59px;"></div>
<div class="t" style="left:704px;top:579px;background:#d4d0c8;padding:0 2px">Партиди</div>
<svg style="position:absolute;left:704px;top:594px;" width="12" height="12" viewBox="0 0 12 12"><circle cx="6" cy="6" r="5.5" fill="#fff"/><path d="M1.2 8.5 A5.5 5.5 0 0 1 9 1.5" stroke="#808080" fill="none"/><path d="M2.5 9 A4.3 4.3 0 0 1 9 2.8" stroke="#404040" fill="none"/><path d="M10.8 3.5 A5.5 5.5 0 0 1 3 10.5" stroke="#fff" fill="none"/><circle cx="6" cy="6" r="2" fill="#000"/></svg>
<div class="t " style="left:720px;top:594px;">Количествени</div>
<svg style="position:absolute;left:704px;top:609px;" width="12" height="12" viewBox="0 0 12 12"><circle cx="6" cy="6" r="5.5" fill="#fff"/><path d="M1.2 8.5 A5.5 5.5 0 0 1 9 1.5" stroke="#808080" fill="none"/><path d="M2.5 9 A4.3 4.3 0 0 1 9 2.8" stroke="#404040" fill="none"/><path d="M10.8 3.5 A5.5 5.5 0 0 1 3 10.5" stroke="#fff" fill="none"/></svg>
<div class="t " style="left:720px;top:609px;">Серийни номера</div>
<svg style="position:absolute;left:704px;top:624px;" width="12" height="12" viewBox="0 0 12 12"><circle cx="6" cy="6" r="5.5" fill="#fff"/><path d="M1.2 8.5 A5.5 5.5 0 0 1 9 1.5" stroke="#808080" fill="none"/><path d="M2.5 9 A4.3 4.3 0 0 1 9 2.8" stroke="#404040" fill="none"/><path d="M10.8 3.5 A5.5 5.5 0 0 1 3 10.5" stroke="#fff" fill="none"/></svg>
<div class="t " style="left:720px;top:624px;">Партидни номера</div>
<div class="g" style="left:874px;top:513px;width:203px;height:152px;"></div>
<div class="t" style="left:883px;top:509px;background:#d4d0c8;padding:0 2px">Годност</div>
<div class="s" style="left:882px;top:524px;width:189px;height:20px;"></div>
<div class="sb" style="left:1053px;top:526px;width:16px;height:16px;"></div>
<svg style="position:absolute;left:1057px;top:532px;" width="7" height="4" viewBox="0 0 7 4"><path d="M0 0 H7 L3.5 4 Z" fill="#000"/></svg>
<div class="t " style="left:886px;top:528px;">Без</div>
<div class="t " style="left:882px;top:547px;">Период:</div>
<div class="t " style="left:954px;top:547px;">Вид период:</div>
<div class="s" style="left:882px;top:562px;width:64px;height:20px;"></div>
<div class="sb" style="left:928px;top:564px;width:16px;height:16px;"></div>
<svg style="position:absolute;left:932px;top:570px;" width="7" height="4" viewBox="0 0 7 4"><path d="M0 0 H7 L3.5 4 Z" fill="#808080"/></svg>
<div class="s" style="left:954px;top:562px;width:84px;height:20px;"></div>
<div class="sb" style="left:1020px;top:564px;width:16px;height:16px;"></div>
<svg style="position:absolute;left:1024px;top:570px;" width="7" height="4" viewBox="0 0 7 4"><path d="M0 0 H7 L3.5 4 Z" fill="#808080"/></svg>
<div class="t " style="left:882px;top:585px;">Крити<span class="u">ч</span>на годност за Доставка</div>
<div class="s" style="left:882px;top:600px;width:120px;height:20px;"></div>
<div class="sb" style="left:984px;top:602px;width:16px;height:16px;"></div>
<svg style="position:absolute;left:988px;top:608px;" width="7" height="4" viewBox="0 0 7 4"><path d="M0 0 H7 L3.5 4 Z" fill="#808080"/></svg>
<div class="t " style="left:882px;top:623px;">Критична мин. <span class="u">г</span>одност</div>
<div class="s" style="left:882px;top:638px;width:120px;height:20px;"></div>
<div class="sb" style="left:984px;top:640px;width:16px;height:16px;"></div>
<svg style="position:absolute;left:988px;top:646px;" width="7" height="4" viewBox="0 0 7 4"><path d="M0 0 H7 L3.5 4 Z" fill="#808080"/></svg>
<div style="left:1094px;top:418px;width:13px;height:13px;border:1px solid;border-color:#808080 #fff #fff #808080;box-shadow:inset 1px 1px #404040,inset -1px -1px #d4d0c8;background:#d4d0c8"></div>
<div class="t " style="left:1112px;top:412px;color:#808080;text-shadow:1px 1px 0 #fff;-webkit-text-stroke:0">Услуга (не се отнема</div>
<div class="t " style="left:1112px;top:425px;color:#808080;text-shadow:1px 1px 0 #fff;-webkit-text-stroke:0">количество)</div>
<div class="s" style="left:1094px;top:448px;width:13px;height:13px;background:#fff"></div>
<div class="t " style="left:1112px;top:442px;">Амбалаж (използва се за</div>
<div class="t " style="left:1112px;top:455px;">амбалаж)</div>
<div class="s" style="left:1094px;top:476px;width:13px;height:13px;background:#fff"></div>
<div class="t " style="left:1112px;top:477px;">Бонус</div>
<div class="t " style="left:1094px;top:509px;">Име - <span class="u">в</span>тори език</div>
<div class="s" style="left:1094px;top:524px;width:235px;height:20px;"></div>
<div class="t " style="left:1094px;top:550px;">Допълнителен информация:</div>
<div class="s" style="left:1094px;top:565px;width:235px;height:21px;"></div>
<div class="s" style="left:695px;top:371px;width:239px;height:21px;"></div>
<div style="left:919px;top:373px;width:1px;height:16px;background:#808080"></div>
<div style="left:920px;top:373px;width:13px;height:16px;background:#d4d0c8"></div>
<svg style="position:absolute;left:923px;top:379px;" width="7" height="4" viewBox="0 0 7 4"><path d="M0 0 H7 L3.5 4 Z" fill="#000"/></svg>
<div class="t" style="left:697px;top:374px;height:14px;background:#0a246a;color:#fff;padding:0 1px">БАР</div>
<div style="left:695px;top:390px;width:239px;height:1px;background:#808080"></div>
<div style="left:695px;top:391px;width:239px;height:44px;background:#fff"></div>
<div class="t " style="left:698px;top:394px;">&lt;Без група по подразбиране&gt;</div>
<div style="left:696px;top:407px;width:237px;height:15px;background:#0a246a;outline:1px dotted #fff;outline-offset:-1px"></div>
<div class="t " style="left:697px;top:408px;color:#fff">БАР</div>
<div class="t " style="left:697px;top:423px;">КУХНЯ</div>
<div style="left:692px;top:370px;width:245px;height:68px;border:3px solid #e02020"></div>
<div style="left:28px;top:438px;width:132px;height:17px;border:2px solid #e02020"></div>
<div style="left:0px;top:725px;width:1366px;height:43px;background:#d4d0c8"></div>
<div class="r" style="left:2px;top:728px;width:52px;height:38px;"></div>
<svg style="position:absolute;left:5px;top:738px;" width="16" height="15" viewBox="0 0 16 15"><path d="M1 3 Q4 1 7 2 L6 7 Q3 6 0 8 Z" fill="#f05020"/><path d="M8 2 Q11 3 15 1 L14 6 Q11 8 7 7 Z" fill="#50b030"/><path d="M0 9 Q3 7 6 8 L5 13 Q2 12 -1 14 Z" fill="#2080e0"/><path d="M7 8 Q10 9 14 7 L13 12 Q10 14 6 13 Z" fill="#f0c020"/></svg>
<div class="t b" style="left:21px;top:741px;font-size:11px;letter-spacing:0.9px">Start</div>
<svg style="position:absolute;left:72px;top:731px;" width="32" height="32" viewBox="0 0 32 32"><circle cx="16" cy="16" r="13.5" fill="#3fb2ee" stroke="#1c78b8" stroke-width="1"/><ellipse cx="16.5" cy="11" rx="6.5" ry="3.2" fill="#e6f6fc" stroke="#1c78b8" stroke-width="0.8"/><path d="M9 18 H30 V23.5 H22 C20 26, 12 26, 10 21 Z" fill="#d4d0c8"/><path d="M10 18.2 H29.5" stroke="#1c78b8" stroke-width="0.8"/><path d="M3 29 C-1 22, 8 10, 18 5 C25 1.5, 31 1, 29 6" stroke="#f4c428" stroke-width="2.6" fill="none"/></svg>
<svg style="position:absolute;left:122px;top:735px;" width="28" height="26" viewBox="0 0 28 26"><rect x="1.5" y="1.5" width="24" height="22" fill="#b8dcf4" stroke="#5a9ad0"/><path d="M22 2 V23" stroke="#5a9ad0"/><circle cx="11.5" cy="12.5" r="8.5" fill="#f07a20"/><circle cx="11.5" cy="12.5" r="6.5" fill="#f59040"/><path d="M8.5 7.5 V17.5 L16.5 12.5 Z" fill="#fff"/></svg>
<svg style="position:absolute;left:172px;top:732px;" width="30" height="30" viewBox="0 0 30 30"><path d="M15 15 L2.88 8 A14 14 0 0 1 27.12 8 Z" fill="#df3b2e"/><path d="M15 15 L27.12 8 A14 14 0 0 1 15 29 Z" fill="#f6c62c"/><path d="M15 15 L15 29 A14 14 0 0 1 2.88 8 Z" fill="#3ba94b"/><circle cx="15" cy="15" r="6.8" fill="#fff"/><circle cx="15" cy="15" r="5.3" fill="#3b7ad8"/></svg>
<svg style="position:absolute;left:221px;top:733px;" width="32" height="30" viewBox="0 0 32 30"><path d="M1.5 4.5 H11 L13 2 H30.5 V28.5 H1.5 Z" fill="#efd57a" stroke="#c8a850"/><rect x="3" y="8" width="27" height="20" fill="#f8e8a8"/><rect x="5" y="2" width="4" height="3" fill="#30a030"/><rect x="13" y="4" width="4" height="3" fill="#d05020"/><rect x="21" y="5" width="4" height="3" fill="#4090c0"/><path d="M5 29 V18 H27 V29 H22 V23 H10 V29 Z" fill="#86c6ee" stroke="#4a90c8"/></svg>
<div style="left:263px;top:728px;width:159px;height:38px;border:1px solid;border-color:#404040 #fff #fff #404040;box-shadow:inset 1px 1px #808080;background:#fff"></div>
<svg style="position:absolute;left:267px;top:732px;" width="32" height="31" viewBox="0 0 32 31"><path d="M3 18 C0 10, 5 2, 12 1 M6 20 C4 12, 8 4, 16 2 M10 20 C9 12, 13 5, 20 3 M2 13 C4 6, 10 2, 18 2 M14 17 C14 10, 18 5, 24 5" stroke="#f0902a" stroke-width="2" fill="none"/><path d="M8 21 C10 13, 22 11, 30 19 L24 21 Z" fill="#dcb080" stroke="#3a2a10" stroke-width="1"/><path d="M14 21 L21 21 L19 29 L15 29 Z" fill="#f0d0c0" stroke="#3a2a10" stroke-width="0.8"/><path d="M20 10 L28 6 M21 12 L29 9" stroke="#404040" stroke-width="1"/></svg>
<div class="t b" style="left:303px;top:741px;letter-spacing:0.3px">AtonS3</div>
<div class="t " style="left:1083px;top:740px;font-size:11.5px">BG</div>
<div style="left:1103px;top:734px;width:1px;height:22px;background:#808080"></div>
<div style="left:1104px;top:734px;width:1px;height:22px;background:#fff"></div>
<svg style="position:absolute;left:1110px;top:736px;" width="18" height="18" viewBox="0 0 18 18"><circle cx="9" cy="9" r="8.5" fill="#1a2a9a"/><circle cx="9" cy="9" r="7" fill="#2a4ad0"/><text x="5.2" y="14" font-size="12" font-weight="bold" fill="#fff" font-family="Liberation Sans">?</text></svg>
<div style="left:1132px;top:734px;width:1px;height:22px;background:#808080"></div>
<div style="left:1133px;top:734px;width:1px;height:22px;background:#fff"></div>
<svg style="position:absolute;left:1138px;top:738px;" width="9" height="13" viewBox="0 0 9 13"><rect x="3.5" y="0.5" width="5" height="4" fill="none" stroke="#000"/><rect x="0.5" y="3.5" width="5" height="4" fill="#d4d0c8" stroke="#000"/><path d="M1 10 H8 L4.5 13 Z" fill="#000"/></svg>
<div class="ts" style="left:1150px;top:728px;width:214px;height:37px;"></div>
<svg style="position:absolute;left:1157px;top:739px;" width="17" height="17" viewBox="0 0 17 17"><circle cx="8" cy="8" r="7.5" fill="#3a9ae0"/><circle cx="6" cy="6" r="3" fill="#fff"/><path d="M8 17 L13 8 L18 17 Z" fill="#f0c020"/></svg>
<svg style="position:absolute;left:1181px;top:739px;" width="17" height="17" viewBox="0 0 17 17"><path d="M1 8 L9 3 L10 5 L16 2 V16 H1 Z" fill="#20a040"/><path d="M4 11 L7 14 L13 7" stroke="#fff" stroke-width="2" fill="none"/></svg>
<svg style="position:absolute;left:1205px;top:739px;" width="17" height="17" viewBox="0 0 17 17"><path d="M2 1 V16" stroke="#707070" stroke-width="1.5"/><path d="M3 2 C7 0, 9 4, 16 3 V10 C10 11, 8 7, 3 9 Z" fill="#fff" stroke="#808080"/></svg>
<svg style="position:absolute;left:1229px;top:739px;" width="17" height="17" viewBox="0 0 17 17"><rect x="4.5" y="5.5" width="12" height="10" fill="#e0e0e0" stroke="#606060"/><rect x="6" y="7" width="9" height="6" fill="#b8b8b8"/><path d="M2 1 V9 M0 3 H4" stroke="#606060" stroke-width="1.2"/></svg>
<svg style="position:absolute;left:1253px;top:739px;" width="18" height="17" viewBox="0 0 18 17"><path d="M1 6 H5 L10 1 V16 L5 11 H1 Z" fill="#e8e8e8" stroke="#707070"/><path d="M12 5 C14 7, 14 10, 12 12 M14 3 C17 6, 17 11, 14 14" stroke="#707070" fill="none"/></svg>
<div class="t" style="left:1160px;top:734px;width:300px;text-align:center;font-size:11.5px">23:02</div>
<div class="t" style="left:1160px;top:748px;width:300px;text-align:center;font-size:11.5px">4.6.2013 г.</div>
<svg style="position:absolute;left:1346px;top:741px;" width="16" height="13" viewBox="0 0 16 13"><rect x="0.5" y="0.5" width="15" height="11" fill="#3a80d0" stroke="#1a4a90"/><rect x="2" y="2" width="12" height="7" fill="#2a6ac0"/><path d="M0 12 H16" stroke="#204080" stroke-width="2"/></svg></div></body></html>
